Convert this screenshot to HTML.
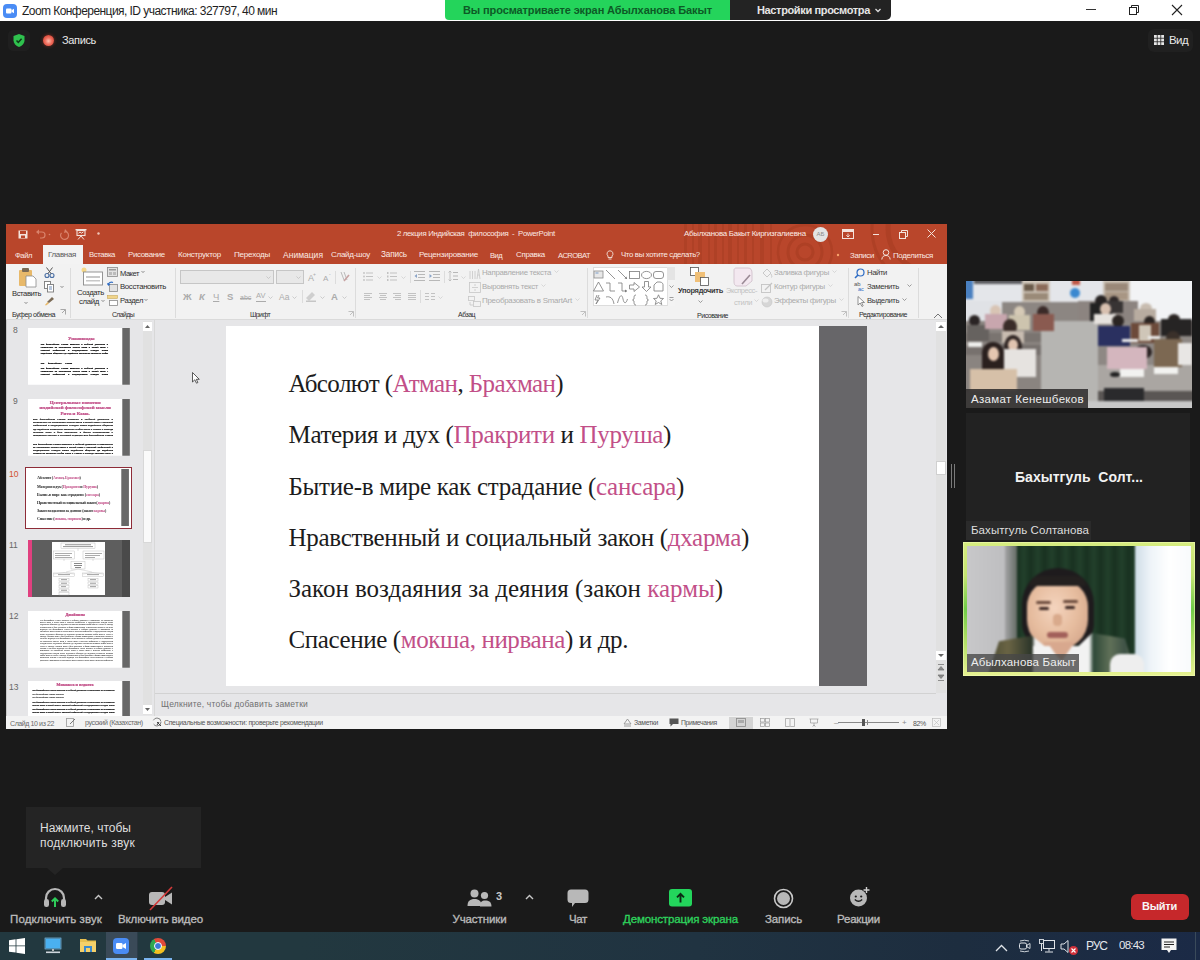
<!DOCTYPE html>
<html><head><meta charset="utf-8">
<style>
*{margin:0;padding:0;box-sizing:border-box}
html,body{width:1200px;height:960px;overflow:hidden;background:#1a1a1a;font-family:"Liberation Sans",sans-serif;position:relative}
.a{position:absolute}
.t{position:absolute;white-space:pre;line-height:1}
svg.a{overflow:visible}
</style></head><body>
<div class="a" style="left:0px;top:0px;width:1200px;height:21px;background:#fff;"></div>
<div class="a" style="left:3px;top:4px;width:14px;height:14px;background:#4a8cf5;border-radius:4px"></div>
<svg class="a" style="left:3px;top:4px;" width="14" height="14" viewBox="0 0 14 14"><rect x="3" y="4.5" width="5.5" height="5" rx="1" fill="#fff"/><path d="M8.5 6.2 L11 4.8 V9.2 L8.5 7.8Z" fill="#fff"/></svg>
<div class="t" style="left:22px;top:4.54px;font-size:12px;color:#1e1e1e;letter-spacing:-0.554px;">Zoom Конференция, ID участника: 327797, 40 мин</div>
<div class="a" style="left:445px;top:0px;width:286px;height:20px;background:#24d45b;border-radius:0 0 0 4px"></div>
<div class="t" style="left:463px;top:4.69px;font-size:11px;color:#0d5a26;font-weight:bold;letter-spacing:-0.113px;">Вы просматриваете экран Абылханова Бакыт</div>
<div class="a" style="left:730px;top:0px;width:161px;height:20px;background:#232323;border-radius:0 0 5px 0"></div>
<div class="t" style="left:757px;top:4.69px;font-size:11px;color:#e6e6e6;font-weight:bold;letter-spacing:-0.359px;">Настройки просмотра</div>
<svg class="a" style="left:874px;top:6px;" width="8" height="8" viewBox="0 0 8 8"><path d="M1.5 3 L4 5.5 L6.5 3" stroke="#ddd" stroke-width="1.3" fill="none"/></svg>
<div class="a" style="left:1086px;top:9px;width:10px;height:1px;background:#333;"></div>
<svg class="a" style="left:1128px;top:4px;" width="12" height="12" viewBox="0 0 12 12"><rect x="1.5" y="3.5" width="7" height="7" fill="none" stroke="#222" stroke-width="1"/><path d="M3.5 3.5 V1.5 H10.5 V8.5 H8.5" fill="none" stroke="#222" stroke-width="1"/></svg>
<svg class="a" style="left:1171px;top:4px;" width="12" height="12" viewBox="0 0 12 12"><path d="M1 1 L11 11 M11 1 L1 11" stroke="#222" stroke-width="1.1"/></svg>
<div class="a" style="left:8px;top:30px;width:22px;height:21px;background:#1f1f1f;border-radius:5px"></div>
<svg class="a" style="left:12px;top:33px;" width="14" height="15" viewBox="0 0 14 15"><path d="M7 1 L12.5 3 V7.5 C12.5 10.5 10 12.8 7 14 C4 12.8 1.5 10.5 1.5 7.5 V3 Z" fill="#2fc24e"/><path d="M4.5 7.5 L6.3 9.3 L9.6 5.8" stroke="#0d3a18" stroke-width="1.5" fill="none"/></svg>
<div class="a" style="left:43px;top:35px;width:11px;height:11px;border-radius:50%;background:radial-gradient(circle at 50% 55%,#ffc0b0 0,#f07060 40%,#d84838 75%,#a03020 100%);box-shadow:0 0 3px 1px rgba(200,60,40,0.35)"></div>
<div class="t" style="left:62px;top:35.19px;font-size:11px;color:#e8e8e8;letter-spacing:-0.349px;">Запись</div>
<div class="a" style="left:1148px;top:29px;width:45px;height:23px;background:#202020;border-radius:6px"></div>
<svg class="a" style="left:1154px;top:35px;" width="11" height="11" viewBox="0 0 11 11"><rect x="0.0" y="0.0" width="2.8" height="2.8" fill="#e6e6e6"/><rect x="0.0" y="3.6" width="2.8" height="2.8" fill="#e6e6e6"/><rect x="0.0" y="7.2" width="2.8" height="2.8" fill="#e6e6e6"/><rect x="3.6" y="0.0" width="2.8" height="2.8" fill="#e6e6e6"/><rect x="3.6" y="3.6" width="2.8" height="2.8" fill="#e6e6e6"/><rect x="3.6" y="7.2" width="2.8" height="2.8" fill="#e6e6e6"/><rect x="7.2" y="0.0" width="2.8" height="2.8" fill="#e6e6e6"/><rect x="7.2" y="3.6" width="2.8" height="2.8" fill="#e6e6e6"/><rect x="7.2" y="7.2" width="2.8" height="2.8" fill="#e6e6e6"/></svg>
<div class="t" style="left:1169px;top:34.77px;font-size:11.5px;color:#e8e8e8;letter-spacing:-0.604px;">Вид</div>
<div class="a" style="left:6px;top:224px;width:941px;height:505px;background:#e6e6e8;"></div>
<div class="a" style="left:6px;top:224px;width:941px;height:40px;background:#b9462b;"></div>
<svg class="a" style="left:640px;top:224px;overflow:hidden" width="307" height="40" viewBox="0 0 307 40"><g fill="none" stroke="#a63c22" stroke-opacity="0.6"><circle cx="165" cy="28" r="8" stroke-width="3"/><circle cx="165" cy="28" r="17" stroke-width="3"/><circle cx="165" cy="28" r="27" stroke-width="2.5"/><circle cx="290" cy="5" r="42" stroke-width="5"/><circle cx="290" cy="5" r="58" stroke-width="3"/></g><g fill="#a63c22" fill-opacity="0.5"><rect x="44" y="0" width="3" height="40"/><rect x="52" y="0" width="2" height="40"/><rect x="58" y="0" width="4" height="40"/><rect x="68" y="0" width="2" height="40"/><rect x="74" y="0" width="3" height="40"/><rect x="82" y="0" width="2" height="40"/><rect x="88" y="0" width="4" height="40"/><rect x="97" y="0" width="2" height="40"/><rect x="104" y="0" width="3" height="40"/><rect x="112" y="0" width="2" height="40"/><rect x="120" y="0" width="4" height="40"/><rect x="130" y="0" width="2" height="40"/></g></svg>
<svg class="a" style="left:18px;top:230px;" width="10" height="9" viewBox="0 0 10 9"><rect x="0.5" y="0.5" width="9" height="8" fill="#f4e3dc"/><rect x="2" y="1" width="6" height="3" fill="#b9462b"/><rect x="3" y="5.5" width="4" height="2.5" fill="#b9462b"/></svg>
<svg class="a" style="left:35px;top:229px;" width="12" height="11" viewBox="0 0 12 11"><path d="M3 3 H7 A3 3 0 0 1 7 9 H5" stroke="#d9836c" stroke-width="1.2" fill="none"/><path d="M1 3 L4 0.5 V5.5Z" fill="#d9836c"/></svg>
<svg class="a" style="left:48px;top:233px;" width="3" height="3" viewBox="0 0 3 3"><circle cx="1.5" cy="1.5" r="0.8" fill="#d9836c"/></svg>
<svg class="a" style="left:59px;top:229px;" width="10" height="11" viewBox="0 0 10 11"><path d="M6.5 2.5 A4 4 0 1 1 2.5 3.8" stroke="#d9836c" stroke-width="1.2" fill="none"/><path d="M6 0 L8.5 2.8 L5 4Z" fill="#d9836c"/></svg>
<svg class="a" style="left:75px;top:228px;" width="12" height="12" viewBox="0 0 12 12"><rect x="0.5" y="1" width="11" height="1.4" fill="#f4e3dc"/><rect x="2" y="2.5" width="8" height="5" fill="none" stroke="#f4e3dc" stroke-width="1.1"/><path d="M6 8 L3 11.5 M6 8 L9 11.5 M3.5 5.2 L5 4 L6.5 5.2 L8.5 3.8" stroke="#f4e3dc" stroke-width="1" fill="none"/></svg>
<svg class="a" style="left:96px;top:231px;" width="5" height="5" viewBox="0 0 5 5"><circle cx="2.5" cy="2.5" r="1.2" fill="#f0c6b8"/></svg>
<div class="t" style="left:397px;top:229.89px;font-size:7.81px;color:#fbe9e3;letter-spacing:-0.318px;">2 лекция Индийская  философия  -  PowerPoint</div>
<div class="t" style="left:684px;top:229.79px;font-size:7.93px;color:#fbe9e3;letter-spacing:-0.280px;">Абылханова Бакыт Киргизгалиевна</div>
<div class="a" style="left:813px;top:227px;width:15px;height:15px;border-radius:50%;background:#e3e3e3;color:#8a8a8a;font-size:6px;line-height:15px;text-align:center">АБ</div>
<svg class="a" style="left:842px;top:229px;" width="12" height="10" viewBox="0 0 12 10"><rect x="0.5" y="0.5" width="11" height="9" fill="none" stroke="#f4e3dc" stroke-width="1"/><rect x="0.5" y="0.5" width="11" height="2.5" fill="#f4e3dc"/><path d="M6 4.5 V8 M4.3 6.3 L6 8 L7.7 6.3" stroke="#f4e3dc" stroke-width="0.9" fill="none"/></svg>
<div class="a" style="left:873px;top:234px;width:6px;height:1px;background:#f4e3dc;"></div>
<svg class="a" style="left:899px;top:230px;" width="9" height="9" viewBox="0 0 9 9"><rect x="0.5" y="2.5" width="6" height="6" fill="none" stroke="#f4e3dc"/><path d="M2.5 2.5 V0.5 H8.5 V6.5 H6.5" fill="none" stroke="#f4e3dc"/></svg>
<svg class="a" style="left:927px;top:229px;" width="9" height="9" viewBox="0 0 9 9"><path d="M0.5 0.5 L8.5 8.5 M8.5 0.5 L0.5 8.5" stroke="#f4e3dc" stroke-width="1"/></svg>
<div class="a" style="left:43px;top:245px;width:40px;height:19px;background:#f3f3f3;"></div>
<div class="t" style="left:15px;top:251.52px;font-size:7.66px;color:#fbe9e3;letter-spacing:-0.463px;">Файл</div>
<div class="t" style="left:48px;top:251.30px;font-size:7.91px;color:#5a5a5a;letter-spacing:-0.300px;">Главная</div>
<div class="t" style="left:89px;top:251.47px;font-size:7.71px;color:#fbe9e3;letter-spacing:-0.380px;">Вставка</div>
<div class="t" style="left:128px;top:251.31px;font-size:7.9px;color:#fbe9e3;letter-spacing:-0.311px;">Рисование</div>
<div class="t" style="left:178px;top:251.22px;font-size:8.01px;color:#fbe9e3;letter-spacing:-0.241px;">Конструктор</div>
<div class="t" style="left:234px;top:251.16px;font-size:8.08px;color:#fbe9e3;letter-spacing:-0.236px;">Переходы</div>
<div class="t" style="left:283px;top:250.80px;font-size:8.5px;color:#fbe9e3;letter-spacing:0.012px;">Анимация</div>
<div class="t" style="left:331px;top:251.23px;font-size:8.0px;color:#fbe9e3;letter-spacing:-0.273px;">Слайд-шоу</div>
<div class="t" style="left:381px;top:251.05px;font-size:8.21px;color:#fbe9e3;letter-spacing:-0.155px;">Запись</div>
<div class="t" style="left:419px;top:251.18px;font-size:8.06px;color:#fbe9e3;letter-spacing:-0.231px;">Рецензирование</div>
<div class="t" style="left:490px;top:251.64px;font-size:7.51px;color:#fbe9e3;letter-spacing:-0.530px;">Вид</div>
<div class="t" style="left:516px;top:251.29px;font-size:7.93px;color:#fbe9e3;letter-spacing:-0.300px;">Справка</div>
<div class="t" style="left:558px;top:251.60px;font-size:7.56px;color:#fbe9e3;letter-spacing:-0.569px;">ACROBAT</div>
<svg class="a" style="left:606px;top:250px;" width="8" height="10" viewBox="0 0 8 10"><path d="M4 0.8 A3 3 0 0 1 6 6 V7.5 H2 V6 A3 3 0 0 1 4 0.8Z" fill="none" stroke="#f4e3dc" stroke-width="0.9"/><path d="M2.5 9 H5.5" stroke="#f4e3dc" stroke-width="0.9"/></svg>
<div class="t" style="left:621px;top:251.41px;font-size:7.79px;color:#fbe9e3;letter-spacing:-0.325px;">Что вы хотите сделать?</div>
<svg class="a" style="left:836px;top:253px;" width="4" height="4" viewBox="0 0 4 4"><circle cx="2" cy="2" r="1.2" fill="#f7a26b"/></svg>
<div class="t" style="left:850px;top:251.86px;font-size:7.84px;color:#fbe9e3;letter-spacing:-0.337px;">Записи</div>
<svg class="a" style="left:881px;top:249px;" width="11" height="11" viewBox="0 0 11 11"><circle cx="5" cy="3.5" r="2.8" fill="none" stroke="#f4e3dc" stroke-width="1"/><path d="M0.8 10.5 C1 7.5 3 6.5 5 6.5 C7 6.5 9 7.5 9.2 10.5" fill="none" stroke="#f4e3dc" stroke-width="1"/></svg>
<div class="t" style="left:893px;top:251.85px;font-size:7.85px;color:#fbe9e3;letter-spacing:-0.333px;">Поделиться</div>
<div class="a" style="left:6px;top:264px;width:941px;height:56px;background:#f2f2f2;"></div>
<div class="a" style="left:6px;top:319px;width:941px;height:1px;background:#dadada;"></div>
<svg class="a" style="left:17px;top:267px;" width="22" height="21" viewBox="0 0 22 21"><rect x="2" y="3" width="13" height="16" rx="1" fill="#e8b96a"/><rect x="5" y="1" width="7" height="4" rx="1" fill="#7a6a55"/><path d="M9 9 H16 L19 12 V20 H9Z" fill="#fff" stroke="#8c8c8c" stroke-width="0.8"/></svg>
<div class="t" style="left:12px;top:289.54px;font-size:7.63px;color:#2e2e2e;letter-spacing:-0.416px;">Вставить</div>
<svg class="a" style="left:23px;top:301px;" width="6" height="4" viewBox="0 0 6 4"><path d="M1.5 1 L3 2.6 L4.5 1" stroke="#777" stroke-width="0.8" fill="none"/></svg>
<svg class="a" style="left:44px;top:267px;" width="11" height="11" viewBox="0 0 11 11"><circle cx="3" cy="8.5" r="2" fill="none" stroke="#4a6fa5" stroke-width="1.1"/><circle cx="8" cy="8.5" r="2" fill="none" stroke="#4a6fa5" stroke-width="1.1"/><path d="M3.8 6.8 L8.5 0.5 M7.2 6.8 L2.5 0.5" stroke="#555" stroke-width="1"/></svg>
<svg class="a" style="left:44px;top:281px;" width="11" height="12" viewBox="0 0 11 12"><rect x="0.5" y="0.5" width="6" height="7" fill="#fff" stroke="#7a7a7a" stroke-width="0.9"/><rect x="3.5" y="3.5" width="6" height="7.5" fill="#fff" stroke="#7a7a7a" stroke-width="0.9"/><path d="M5 6 H8 M5 8 H8" stroke="#4a6fa5" stroke-width="0.8"/></svg>
<svg class="a" style="left:59px;top:285px;" width="6" height="4" viewBox="0 0 6 4"><path d="M1.5 1 L3 2.6 L4.5 1" stroke="#777" stroke-width="0.8" fill="none"/></svg>
<svg class="a" style="left:44px;top:296px;" width="11" height="10" viewBox="0 0 11 10"><path d="M8 1 L10 3 L5 7 L3 6Z" fill="#7a6a55"/><path d="M1 9 L3.5 6 L5 7.5 L2 9.5Z" fill="#e8b96a"/></svg>
<div class="t" style="left:12px;top:311.97px;font-size:7.12px;color:#2e2e2e;letter-spacing:-0.446px;">Буфер обмена</div>
<svg class="a" style="left:60px;top:309px;" width="6" height="6" viewBox="0 0 6 6"><path d="M0.5 0.5 H5.5 V5.5 M2 4 L5 1" stroke="#888" stroke-width="0.7" fill="none"/></svg>
<div class="a" style="left:70px;top:268px;width:1px;height:50px;background:#dcdcdc;"></div>
<svg class="a" style="left:80px;top:266px;" width="24" height="20" viewBox="0 0 24 20"><circle cx="4" cy="4" r="2.5" fill="#f5d88a"/><rect x="3.5" y="6" width="19" height="13" fill="#fff" stroke="#8a8a8a" stroke-width="0.9"/><rect x="6" y="10" width="14" height="2" fill="#c8c8c8"/><rect x="6" y="14" width="14" height="1.5" fill="#c8c8c8"/></svg>
<div class="t" style="left:77px;top:289.42px;font-size:7.77px;color:#2e2e2e;letter-spacing:-0.362px;">Создать</div>
<div class="t" style="left:79px;top:298.38px;font-size:7.82px;color:#2e2e2e;letter-spacing:-0.350px;">слайд</div>
<svg class="a" style="left:100px;top:299px;" width="6" height="4" viewBox="0 0 6 4"><path d="M1.5 1 L3 2.6 L4.5 1" stroke="#777" stroke-width="0.8" fill="none"/></svg>
<svg class="a" style="left:107px;top:267px;" width="11" height="10" viewBox="0 0 11 10"><rect x="0.5" y="0.5" width="10" height="9" fill="#e2e2e2" stroke="#8a8a8a" stroke-width="0.8"/><rect x="2" y="2" width="7" height="1.5" fill="#999"/><rect x="2" y="5" width="3" height="3" fill="#bbb"/><rect x="6" y="5" width="3" height="3" fill="#bbb"/></svg>
<div class="t" style="left:120px;top:269.61px;font-size:7.55px;color:#2e2e2e;letter-spacing:-0.476px;">Макет</div>
<svg class="a" style="left:140px;top:270px;" width="6" height="4" viewBox="0 0 6 4"><path d="M1.5 1 L3 2.6 L4.5 1" stroke="#777" stroke-width="0.8" fill="none"/></svg>
<svg class="a" style="left:107px;top:281px;" width="11" height="11" viewBox="0 0 11 11"><rect x="2.5" y="3.5" width="8" height="7" fill="#e2e2e2" stroke="#8a8a8a" stroke-width="0.8"/><path d="M1 4 A3.5 3.5 0 0 1 6 1.5" stroke="#2d6bc4" stroke-width="1.1" fill="none"/><path d="M0 2 L1.2 5 L3.5 3Z" fill="#2d6bc4"/></svg>
<div class="t" style="left:120px;top:283.39px;font-size:7.81px;color:#2e2e2e;letter-spacing:-0.337px;">Восстановить</div>
<svg class="a" style="left:107px;top:295px;" width="11" height="11" viewBox="0 0 11 11"><rect x="0.5" y="0.5" width="10" height="3" fill="#f0d48a" stroke="#c9a85a" stroke-width="0.6"/><rect x="2.5" y="5.5" width="8" height="5" fill="#fff" stroke="#8a8a8a" stroke-width="0.8"/></svg>
<div class="t" style="left:120px;top:297.49px;font-size:7.69px;color:#2e2e2e;letter-spacing:-0.404px;">Раздел</div>
<svg class="a" style="left:143px;top:298px;" width="6" height="4" viewBox="0 0 6 4"><path d="M1.5 1 L3 2.6 L4.5 1" stroke="#777" stroke-width="0.8" fill="none"/></svg>
<div class="t" style="left:112px;top:312.18px;font-size:6.88px;color:#2e2e2e;letter-spacing:-0.599px;">Слайды</div>
<div class="a" style="left:175px;top:268px;width:1px;height:50px;background:#dcdcdc;"></div>
<div class="a" style="left:180px;top:270px;width:94px;height:14px;background:#e8e8e8;border:1px solid #c6c6c6"></div>
<svg class="a" style="left:266px;top:276px;" width="5" height="3" viewBox="0 0 5 3"><path d="M0.5 0.5 L2.5 2.5 L4.5 0.5" stroke="#bbb" stroke-width="0.7" fill="none"/></svg>
<div class="a" style="left:276px;top:270px;width:28px;height:14px;background:#e8e8e8;border:1px solid #c6c6c6"></div>
<svg class="a" style="left:296px;top:276px;" width="5" height="3" viewBox="0 0 5 3"><path d="M0.5 0.5 L2.5 2.5 L4.5 0.5" stroke="#bbb" stroke-width="0.7" fill="none"/></svg>
<div class="t" style="left:308px;top:274.38px;font-size:9px;color:#ababab;">A</div>
<div class="t" style="left:313px;top:271.77px;font-size:5px;color:#ababab;">+</div>
<div class="t" style="left:323px;top:275.23px;font-size:8px;color:#ababab;">A</div>
<div class="t" style="left:329px;top:271.77px;font-size:5px;color:#ababab;">-</div>
<svg class="a" style="left:339px;top:271px;" width="11" height="11" viewBox="0 0 11 11"><path d="M2 1 L5 9 M5 1 L8 9" stroke="#bbb" stroke-width="1"/><path d="M5 10 L10 4" stroke="#c7a3a3" stroke-width="1.6"/></svg>
<div class="a" style="left:335px;top:271px;width:1px;height:13px;background:#dcdcdc;"></div>
<div class="t" style="left:183px;top:291.96px;font-size:9.5px;color:#ababab;font-weight:bold">Ж</div>
<div class="t" style="left:199px;top:291.96px;font-size:9.5px;color:#ababab;font-weight:bold;font-style:italic">К</div>
<div class="t" style="left:213px;top:291.96px;font-size:9.5px;color:#ababab;text-decoration:underline">Ч</div>
<div class="t" style="left:227px;top:291.96px;font-size:9.5px;color:#ababab;font-weight:bold">S</div>
<div class="t" style="left:240px;top:293.57px;font-size:7px;color:#ababab;text-decoration:line-through">abc</div>
<div class="t" style="left:256px;top:291.65px;font-size:7.5px;color:#ababab;">AV</div>
<div class="a" style="left:256px;top:301px;width:10px;height:1px;background:#ababab;"></div>
<div class="t" style="left:279px;top:292.80px;font-size:8.5px;color:#ababab;">Aa</div>
<svg class="a" style="left:268px;top:296px;" width="5" height="3" viewBox="0 0 5 3"><path d="M0.5 0.5 L2.5 2.5 L4.5 0.5" stroke="#bbb" stroke-width="0.7" fill="none"/></svg>
<svg class="a" style="left:292px;top:296px;" width="5" height="3" viewBox="0 0 5 3"><path d="M0.5 0.5 L2.5 2.5 L4.5 0.5" stroke="#bbb" stroke-width="0.7" fill="none"/></svg>
<div class="a" style="left:302px;top:290px;width:1px;height:13px;background:#dcdcdc;"></div>
<svg class="a" style="left:305px;top:290px;" width="12" height="12" viewBox="0 0 12 12"><path d="M1 8 L7 2 L10 5 L4 11Z" fill="#cfcfcf"/><rect x="1" y="10.5" width="10" height="1.5" fill="#c6c6c6"/></svg>
<svg class="a" style="left:320px;top:296px;" width="5" height="3" viewBox="0 0 5 3"><path d="M0.5 0.5 L2.5 2.5 L4.5 0.5" stroke="#bbb" stroke-width="0.7" fill="none"/></svg>
<div class="t" style="left:331px;top:291.96px;font-size:9.5px;color:#ababab;font-weight:bold;">A</div>
<svg class="a" style="left:342px;top:296px;" width="5" height="3" viewBox="0 0 5 3"><path d="M0.5 0.5 L2.5 2.5 L4.5 0.5" stroke="#bbb" stroke-width="0.7" fill="none"/></svg>
<div class="t" style="left:250px;top:312.10px;font-size:6.97px;color:#2e2e2e;letter-spacing:-0.589px;">Шрифт</div>
<svg class="a" style="left:348px;top:311px;" width="6" height="6" viewBox="0 0 6 6"><path d="M0.5 0.5 H5.5 V5.5 M2 4 L5 1" stroke="#aaa" stroke-width="0.7" fill="none"/></svg>
<div class="a" style="left:355px;top:268px;width:1px;height:50px;background:#dcdcdc;"></div>
<svg class="a" style="left:363px;top:272px;" width="10" height="9" viewBox="0 0 10 9"><circle cx="1" cy="1" r="0.9" fill="#c2c2c2"/><circle cx="1" cy="4.5" r="0.9" fill="#c2c2c2"/><circle cx="1" cy="8" r="0.9" fill="#c2c2c2"/><rect x="3" y="0.5" width="7" height="1" fill="#c2c2c2"/><rect x="3" y="4" width="7" height="1" fill="#c2c2c2"/><rect x="3" y="7.5" width="7" height="1" fill="#c2c2c2"/></svg>
<svg class="a" style="left:377px;top:276px;" width="5" height="3" viewBox="0 0 5 3"><path d="M0.5 0.5 L2.5 2.5 L4.5 0.5" stroke="#ccc" stroke-width="0.7" fill="none"/></svg>
<svg class="a" style="left:387px;top:272px;" width="10" height="9" viewBox="0 0 10 9"><rect x="0" y="0" width="1.5" height="2" fill="#c2c2c2"/><rect x="0" y="3.5" width="1.5" height="2" fill="#c2c2c2"/><rect x="0" y="7" width="1.5" height="2" fill="#c2c2c2"/><rect x="3" y="0.5" width="7" height="1" fill="#c2c2c2"/><rect x="3" y="4" width="7" height="1" fill="#c2c2c2"/><rect x="3" y="7.5" width="7" height="1" fill="#c2c2c2"/></svg>
<svg class="a" style="left:401px;top:276px;" width="5" height="3" viewBox="0 0 5 3"><path d="M0.5 0.5 L2.5 2.5 L4.5 0.5" stroke="#ccc" stroke-width="0.7" fill="none"/></svg>
<div class="a" style="left:410px;top:271px;width:1px;height:12px;background:#dcdcdc;"></div>
<svg class="a" style="left:414px;top:271px;" width="11" height="10" viewBox="0 0 11 10"><rect x="0" y="0" width="11" height="1" fill="#b8b8b8"/><rect x="4" y="3" width="7" height="1" fill="#b8b8b8"/><rect x="4" y="6" width="7" height="1" fill="#b8b8b8"/><rect x="0" y="9" width="11" height="1" fill="#b8b8b8"/><path d="M3 3 L0.5 5 L3 7Z" fill="#8aa4c8"/></svg>
<svg class="a" style="left:429px;top:271px;" width="11" height="10" viewBox="0 0 11 10"><rect x="0" y="0" width="11" height="1" fill="#b8b8b8"/><rect x="4" y="3" width="7" height="1" fill="#b8b8b8"/><rect x="4" y="6" width="7" height="1" fill="#b8b8b8"/><rect x="0" y="9" width="11" height="1" fill="#b8b8b8"/><path d="M0.5 3 L3 5 L0.5 7Z" fill="#8aa4c8"/></svg>
<div class="a" style="left:444px;top:271px;width:1px;height:12px;background:#dcdcdc;"></div>
<svg class="a" style="left:448px;top:270px;" width="10" height="12" viewBox="0 0 10 12"><path d="M2 1 V11 M0.5 2.5 L2 1 L3.5 2.5 M0.5 9.5 L2 11 L3.5 9.5" stroke="#b8b8b8" stroke-width="0.8" fill="none"/><rect x="5" y="2" width="5" height="1" fill="#b8b8b8"/><rect x="5" y="5.5" width="5" height="1" fill="#b8b8b8"/><rect x="5" y="9" width="5" height="1" fill="#b8b8b8"/></svg>
<svg class="a" style="left:461px;top:276px;" width="5" height="3" viewBox="0 0 5 3"><path d="M0.5 0.5 L2.5 2.5 L4.5 0.5" stroke="#ccc" stroke-width="0.7" fill="none"/></svg>
<svg class="a" style="left:364px;top:293px;" width="9" height="8" viewBox="0 0 9 8"><rect x="0" y="0" width="8" height="1" fill="#c2c2c2"/><rect x="0" y="2" width="6" height="1" fill="#c2c2c2"/><rect x="0" y="4" width="8" height="1" fill="#c2c2c2"/><rect x="0" y="6" width="6" height="1" fill="#c2c2c2"/></svg>
<svg class="a" style="left:379px;top:293px;" width="9" height="8" viewBox="0 0 9 8"><rect x="0" y="0" width="8" height="1" fill="#c2c2c2"/><rect x="1" y="2" width="6" height="1" fill="#c2c2c2"/><rect x="0" y="4" width="8" height="1" fill="#c2c2c2"/><rect x="1" y="6" width="6" height="1" fill="#c2c2c2"/></svg>
<svg class="a" style="left:393px;top:293px;" width="9" height="8" viewBox="0 0 9 8"><rect x="0" y="0" width="8" height="1" fill="#c2c2c2"/><rect x="2" y="2" width="6" height="1" fill="#c2c2c2"/><rect x="0" y="4" width="8" height="1" fill="#c2c2c2"/><rect x="2" y="6" width="6" height="1" fill="#c2c2c2"/></svg>
<svg class="a" style="left:408px;top:293px;" width="9" height="8" viewBox="0 0 9 8"><rect x="0" y="0" width="8" height="1" fill="#c2c2c2"/><rect x="0" y="2" width="8" height="1" fill="#c2c2c2"/><rect x="0" y="4" width="8" height="1" fill="#c2c2c2"/><rect x="0" y="6" width="8" height="1" fill="#c2c2c2"/></svg>
<div class="a" style="left:420px;top:290px;width:1px;height:13px;background:#dcdcdc;"></div>
<svg class="a" style="left:425px;top:293px;" width="10" height="8" viewBox="0 0 10 8"><rect x="0" y="0" width="4" height="1" fill="#c2c2c2"/><rect x="0" y="3" width="4" height="1" fill="#c2c2c2"/><rect x="0" y="6" width="4" height="1" fill="#c2c2c2"/><rect x="6" y="0" width="4" height="1" fill="#c2c2c2"/><rect x="6" y="3" width="4" height="1" fill="#c2c2c2"/><rect x="6" y="6" width="4" height="1" fill="#c2c2c2"/></svg>
<svg class="a" style="left:438px;top:296px;" width="5" height="3" viewBox="0 0 5 3"><path d="M0.5 0.5 L2.5 2.5 L4.5 0.5" stroke="#ccc" stroke-width="0.7" fill="none"/></svg>
<svg class="a" style="left:469px;top:268px;" width="12" height="12" viewBox="0 0 12 12"><path d="M1 3 V11 M3.5 3 V11 M6 3 V11" stroke="#c6c6c6" stroke-width="0.8"/><path d="M8 11 L9.5 1 L11 11 M8.5 7 H10.5" stroke="#c6c6c6" stroke-width="0.8" fill="none"/></svg>
<div class="t" style="left:482px;top:268.84px;font-size:7.87px;color:#ababab;letter-spacing:-0.309px;">Направление текста</div>
<svg class="a" style="left:554px;top:270px;" width="5" height="3" viewBox="0 0 5 3"><path d="M0.5 0.5 L2.5 2.5 L4.5 0.5" stroke="#ccc" stroke-width="0.7" fill="none"/></svg>
<svg class="a" style="left:469px;top:282px;" width="12" height="11" viewBox="0 0 12 11"><rect x="0.5" y="0.5" width="11" height="10" fill="none" stroke="#c6c6c6" stroke-width="0.8"/><path d="M3 5.5 H9 M6 2 V4 M6 7 V9" stroke="#c6c6c6" stroke-width="0.8"/></svg>
<div class="t" style="left:482px;top:282.88px;font-size:7.82px;color:#ababab;letter-spacing:-0.326px;">Выровнять текст</div>
<svg class="a" style="left:541px;top:284px;" width="5" height="3" viewBox="0 0 5 3"><path d="M0.5 0.5 L2.5 2.5 L4.5 0.5" stroke="#ccc" stroke-width="0.7" fill="none"/></svg>
<svg class="a" style="left:468px;top:296px;" width="13" height="11" viewBox="0 0 13 11"><rect x="0.5" y="0.5" width="6" height="4" fill="none" stroke="#c6c6c6" stroke-width="0.8"/><rect x="5.5" y="5.5" width="7" height="5" fill="none" stroke="#c6c6c6" stroke-width="0.8"/><path d="M2 6 V9 H5" stroke="#c6c6c6" stroke-width="0.8" fill="none"/></svg>
<div class="t" style="left:482px;top:296.78px;font-size:7.94px;color:#ababab;letter-spacing:-0.264px;">Преобразовать в SmartArt</div>
<svg class="a" style="left:575px;top:298px;" width="5" height="3" viewBox="0 0 5 3"><path d="M0.5 0.5 L2.5 2.5 L4.5 0.5" stroke="#ccc" stroke-width="0.7" fill="none"/></svg>
<div class="t" style="left:458px;top:312.11px;font-size:6.96px;color:#2e2e2e;letter-spacing:-0.507px;">Абзац</div>
<svg class="a" style="left:580px;top:311px;" width="6" height="6" viewBox="0 0 6 6"><path d="M0.5 0.5 H5.5 V5.5 M2 4 L5 1" stroke="#aaa" stroke-width="0.7" fill="none"/></svg>
<div class="a" style="left:587px;top:268px;width:1px;height:50px;background:#dcdcdc;"></div>
<div class="a" style="left:593px;top:267px;width:82px;height:39px;background:#fff;border:1px solid #dcdcdc"></div>
<div class="a" style="left:667px;top:267px;width:8px;height:39px;background:#f3f3f3;border-left:1px solid #e0e0e0"></div>
<div class="a" style="left:667px;top:267px;width:8px;height:13px;background:#e4e4e4;"></div>
<svg class="a" style="left:669px;top:285px;" width="5" height="3" viewBox="0 0 5 3"><path d="M0.5 0.5 L2.5 2.5 L4.5 0.5" stroke="#777" stroke-width="0.7" fill="none"/></svg>
<svg class="a" style="left:669px;top:297px;" width="5" height="5" viewBox="0 0 5 5"><path d="M0.5 0.5 H4.5 M0.5 2 L2.5 4 L4.5 2" stroke="#777" stroke-width="0.7" fill="none"/></svg>
<svg class="a" style="left:593px;top:269.0px;" width="11" height="12" viewBox="0 0 11 12"><rect x="1" y="2" width="9" height="7" fill="#e8e8e8" stroke="#8a8a8a" stroke-width="0.8"/><rect x="2.5" y="3.5" width="3" height="1" fill="#7a9cc8"/></svg>
<svg class="a" style="left:605px;top:269.0px;" width="11" height="12" viewBox="0 0 11 12"><path d="M1 1 L10 10" stroke="#7a7a7a" stroke-width="0.8"/></svg>
<svg class="a" style="left:617px;top:269.0px;" width="11" height="12" viewBox="0 0 11 12"><path d="M1 1 L10 10" stroke="#7a7a7a" stroke-width="0.8"/><path d="M10 10 L7.5 9.5 L9.5 7.5Z" fill="#7a7a7a"/></svg>
<svg class="a" style="left:629px;top:269.0px;" width="11" height="12" viewBox="0 0 11 12"><rect x="0.5" y="2.5" width="10" height="7" fill="none" stroke="#7a7a7a" stroke-width="0.8"/></svg>
<svg class="a" style="left:641px;top:269.0px;" width="11" height="12" viewBox="0 0 11 12"><ellipse cx="5.5" cy="6" rx="5" ry="3.6" fill="none" stroke="#7a7a7a" stroke-width="0.8"/></svg>
<svg class="a" style="left:653px;top:269.0px;" width="11" height="12" viewBox="0 0 11 12"><rect x="0.5" y="2.5" width="10" height="7" rx="2.5" fill="none" stroke="#7a7a7a" stroke-width="0.8"/></svg>
<svg class="a" style="left:593px;top:281.3px;" width="11" height="12" viewBox="0 0 11 12"><path d="M5.5 1 L10.5 10 H0.5Z" fill="none" stroke="#7a7a7a" stroke-width="0.8"/></svg>
<svg class="a" style="left:605px;top:281.3px;" width="11" height="12" viewBox="0 0 11 12"><path d="M1 2 H5 V10 H10" fill="none" stroke="#7a7a7a" stroke-width="0.8"/></svg>
<svg class="a" style="left:617px;top:281.3px;" width="11" height="12" viewBox="0 0 11 12"><path d="M1 2 H5 V10 H10" fill="none" stroke="#7a7a7a" stroke-width="0.8"/><path d="M10 10 L8 8.5 V11.5Z" fill="#7a7a7a"/></svg>
<svg class="a" style="left:629px;top:281.3px;" width="11" height="12" viewBox="0 0 11 12"><path d="M0.5 4 H5 V1.5 L10.5 6 L5 10.5 V8 H0.5Z" fill="none" stroke="#7a7a7a" stroke-width="0.8"/></svg>
<svg class="a" style="left:641px;top:281.3px;" width="11" height="12" viewBox="0 0 11 12"><path d="M3.5 0.5 H7.5 V6 H10 L5.5 10.5 L1 6 H3.5Z" fill="none" stroke="#7a7a7a" stroke-width="0.8"/></svg>
<svg class="a" style="left:653px;top:281.3px;" width="11" height="12" viewBox="0 0 11 12"><path d="M1 10 V4 L4 1 H7 A3.5 3.5 0 0 1 10 5 V10Z" fill="none" stroke="#7a7a7a" stroke-width="0.8"/></svg>
<svg class="a" style="left:593px;top:293.6px;" width="11" height="12" viewBox="0 0 11 12"><path d="M4 1 L2 6 H5 L3 10 L7 4 H4.5 L6 1" fill="none" stroke="#7a7a7a" stroke-width="0.8"/></svg>
<svg class="a" style="left:605px;top:293.6px;" width="11" height="12" viewBox="0 0 11 12"><path d="M1 3 C5 2 8 4 9 10" fill="none" stroke="#7a7a7a" stroke-width="0.8"/></svg>
<svg class="a" style="left:617px;top:293.6px;" width="11" height="12" viewBox="0 0 11 12"><path d="M0.5 9 C3 0 5 0 6 5 C7 10 9 10 10.5 5" fill="none" stroke="#7a7a7a" stroke-width="0.8"/></svg>
<svg class="a" style="left:629px;top:293.6px;" width="11" height="12" viewBox="0 0 11 12"><path d="M7 1 C5 1 5 2 5 5 L3.5 6 L5 7 C5 10 5 11 7 11" fill="none" stroke="#7a7a7a" stroke-width="0.8"/></svg>
<svg class="a" style="left:641px;top:293.6px;" width="11" height="12" viewBox="0 0 11 12"><path d="M4 1 C6 1 6 2 6 5 L7.5 6 L6 7 C6 10 6 11 4 11" fill="none" stroke="#7a7a7a" stroke-width="0.8"/></svg>
<svg class="a" style="left:653px;top:293.6px;" width="11" height="12" viewBox="0 0 11 12"><path d="M5.5 0.8 L7 4.3 L10.5 4.5 L7.8 6.9 L8.8 10.5 L5.5 8.5 L2.2 10.5 L3.2 6.9 L0.5 4.5 L4 4.3Z" fill="none" stroke="#7a7a7a" stroke-width="0.8"/></svg>
<svg class="a" style="left:690px;top:267px;" width="20" height="20" viewBox="0 0 20 20"><rect x="0.5" y="0.5" width="8" height="8" fill="#fff" stroke="#555" stroke-width="0.8"/><rect x="5" y="5" width="10" height="10" fill="#f0c078"/><rect x="10.5" y="10.5" width="8" height="8" fill="#fff" stroke="#555" stroke-width="0.8"/></svg>
<div class="t" style="left:678px;top:287.20px;font-size:7.44px;color:#3a3a3a;font-weight:bold;letter-spacing:-0.307px;">Упорядочить</div>
<svg class="a" style="left:698px;top:300px;" width="5" height="3" viewBox="0 0 5 3"><path d="M0.5 0.5 L2.5 2.5 L4.5 0.5" stroke="#777" stroke-width="0.7" fill="none"/></svg>
<svg class="a" style="left:733px;top:267px;" width="20" height="20" viewBox="0 0 20 20"><path d="M3 1 H15 C18 1 19 3 19 6 V14 L13 19 H4 C2 19 1 17 1 15 V3 C1 2 2 1 3 1Z" fill="#f3e8f0" stroke="#cdbdc8" stroke-width="0.8"/><path d="M9 17 L17 8" stroke="#9a8a95" stroke-width="1.6"/></svg>
<div class="t" style="left:726px;top:287.13px;font-size:7.52px;color:#c2c2c2;letter-spacing:-0.447px;">Экспресс-</div>
<div class="t" style="left:734px;top:298.58px;font-size:7.58px;color:#c2c2c2;letter-spacing:-0.435px;">стили</div>
<svg class="a" style="left:754px;top:299px;" width="5" height="3" viewBox="0 0 5 3"><path d="M0.5 0.5 L2.5 2.5 L4.5 0.5" stroke="#ccc" stroke-width="0.7" fill="none"/></svg>
<svg class="a" style="left:761px;top:268px;" width="12" height="11" viewBox="0 0 12 11"><path d="M2 5 L6 1 L10 5 L6 9Z" fill="none" stroke="#c4c4c4" stroke-width="0.9"/><path d="M10 6 C11 8 11 9 10.5 9.5" stroke="#c4c4c4" stroke-width="0.9" fill="none"/></svg>
<div class="t" style="left:774px;top:268.88px;font-size:7.82px;color:#ababab;letter-spacing:-0.340px;">Заливка фигуры</div>
<svg class="a" style="left:832px;top:270px;" width="5" height="3" viewBox="0 0 5 3"><path d="M0.5 0.5 L2.5 2.5 L4.5 0.5" stroke="#ccc" stroke-width="0.7" fill="none"/></svg>
<svg class="a" style="left:761px;top:282px;" width="12" height="11" viewBox="0 0 12 11"><rect x="0.5" y="2.5" width="9" height="8" fill="none" stroke="#c4c4c4" stroke-width="0.9"/><path d="M4 8 L11 1" stroke="#c4c4c4" stroke-width="1.2"/></svg>
<div class="t" style="left:774px;top:282.84px;font-size:7.87px;color:#ababab;letter-spacing:-0.313px;">Контур фигуры</div>
<svg class="a" style="left:828px;top:284px;" width="5" height="3" viewBox="0 0 5 3"><path d="M0.5 0.5 L2.5 2.5 L4.5 0.5" stroke="#ccc" stroke-width="0.7" fill="none"/></svg>
<svg class="a" style="left:761px;top:296px;" width="12" height="11" viewBox="0 0 12 11"><circle cx="6" cy="6" r="5" fill="#d6d6d6" stroke="#c4c4c4" stroke-width="0.6"/><ellipse cx="4.5" cy="4.5" rx="3" ry="2" fill="#eee"/></svg>
<div class="t" style="left:774px;top:296.77px;font-size:7.95px;color:#ababab;letter-spacing:-0.305px;">Эффекты фигуры</div>
<svg class="a" style="left:839px;top:298px;" width="5" height="3" viewBox="0 0 5 3"><path d="M0.5 0.5 L2.5 2.5 L4.5 0.5" stroke="#ccc" stroke-width="0.7" fill="none"/></svg>
<div class="t" style="left:697px;top:312.06px;font-size:7.02px;color:#2e2e2e;letter-spacing:-0.483px;">Рисование</div>
<svg class="a" style="left:841px;top:311px;" width="6" height="6" viewBox="0 0 6 6"><path d="M0.5 0.5 H5.5 V5.5 M2 4 L5 1" stroke="#aaa" stroke-width="0.7" fill="none"/></svg>
<div class="a" style="left:848px;top:268px;width:1px;height:50px;background:#dcdcdc;"></div>
<svg class="a" style="left:854px;top:268px;" width="11" height="11" viewBox="0 0 11 11"><circle cx="6.5" cy="4.5" r="3.5" fill="none" stroke="#2d6bc4" stroke-width="1.2"/><path d="M4 7 L1 10" stroke="#2d6bc4" stroke-width="1.6"/></svg>
<div class="t" style="left:867px;top:268.97px;font-size:7.72px;color:#3a3a3a;letter-spacing:-0.406px;">Найти</div>
<div class="t" style="left:854px;top:280.92px;font-size:6px;color:#555;">ab</div>
<div class="t" style="left:858px;top:286.84px;font-size:5.5px;color:#2d6bc4;">ac</div>
<div class="t" style="left:867px;top:282.91px;font-size:7.78px;color:#3a3a3a;letter-spacing:-0.371px;">Заменить</div>
<svg class="a" style="left:907px;top:284px;" width="5" height="3" viewBox="0 0 5 3"><path d="M0.5 0.5 L2.5 2.5 L4.5 0.5" stroke="#777" stroke-width="0.7" fill="none"/></svg>
<svg class="a" style="left:857px;top:296px;" width="9" height="11" viewBox="0 0 9 11"><path d="M1 0.5 V9 L3.2 7 L5 10.5 L6.2 9.8 L4.5 6.5 H7.5Z" fill="#fff" stroke="#777" stroke-width="0.8"/></svg>
<div class="t" style="left:867px;top:297.00px;font-size:7.68px;color:#3a3a3a;letter-spacing:-0.428px;">Выделить</div>
<svg class="a" style="left:902px;top:298px;" width="5" height="3" viewBox="0 0 5 3"><path d="M0.5 0.5 L2.5 2.5 L4.5 0.5" stroke="#777" stroke-width="0.7" fill="none"/></svg>
<div class="t" style="left:859px;top:311.99px;font-size:7.1px;color:#2e2e2e;letter-spacing:-0.435px;">Редактирование</div>
<div class="a" style="left:918px;top:268px;width:1px;height:50px;background:#dcdcdc;"></div>
<svg class="a" style="left:933px;top:313px;" width="10" height="6" viewBox="0 0 10 6"><path d="M1 5 L5 1 L9 5" stroke="#666" stroke-width="0.9" fill="none"/></svg>
<div class="a" style="left:6px;top:320px;width:1px;height:396px;background:#c8c8c8;"></div>
<div class="t" style="left:13px;top:326.30px;font-size:8.5px;color:#666;">8</div>
<div class="a" style="left:28px;top:328px;width:641px;height:357px;background:#fff;overflow:hidden;transform:scale(0.159);transform-origin:0 0;font-family:'Liberation Serif',serif"><div class="a" style="left:170px;top:52px;width:330px;text-align:center;font-size:30px;line-height:1;color:#c24f88;font-weight:bold;white-space:nowrap;-webkit-text-stroke:1.5px #c24f88">Упанишады</div><div class="a" style="left:78px;top:92px;width:426px;height:74.0px;overflow:hidden;font-size:14px;line-height:18.5px;text-align:justify;color:#000;font-weight:bold;-webkit-text-stroke:1px #000">Эти философские учения возникли в глубокой древности и развивались на протяжении многих веков в тесной связи с религией мифологией и традиционным укладом жизни индийского общества где ведийская литература занимала особое место а учения о природе человека мира и бога излагались в форме комментариев к священным текстам и поучений мудрецов Эти философские учения возникли в глубокой древности и развивались на протяжении многих веков в тесной связи с религией мифологией и традиционным укладом жизни индийского общества где ведийская литература занимала особое место а учения о природе человека мира и бога излагались в форме комментариев к священным текстам и поучений мудрецов Эти философские учения возникли в глубокой древности и развивались на протяжении многих веков в тесной связи с религией мифологией и традиционным укладом жизни индийского общества где ведийская литература занимала особое место а учения о природе человека мира и бога излагались в форме комментариев к священным текстам и поучений мудрецов Эти философские учения возникли в глубокой древности и развивались на протяжении многих веков в тесной связи с религией мифологией и традиционным укладом жизни индийского общества где ведийская литература занимала особое место а учения о природе человека мира и бога излагались в форме комментариев к священным текстам и поучений мудрецов Эти философские учения возникли в глубокой древности и развивались на протяжении многих веков в тесной связи с религией мифологией и традиционным укладом жизни индийского общества где ведийская литература занимала особое место а учения о природе человека мира и бога излагались в форме комментариев к священным текстам и поучений мудрецов Эти философские учения возникли в глубокой древности и развивались на протяжении многих веков в тесной связи с религией мифологией и традиционным укладом жизни индийского общества где ведийская литература занимала особое место а учения о природе человека мира и бога излагались в форме комментариев к священным текстам и поучений мудрецов </div><div class="a" style="left:78px;top:212px;width:200px;height:18px;overflow:hidden;font-size:14px;line-height:18px;text-align:justify;color:#000;font-weight:bold;-webkit-text-stroke:1px #000">Эти философские учения возникли в глубокой древности и развивались на протяжении многих веков в тесной связи с религией мифологией и традиционным укладом жизни индийского общества где ведийская литература занимала особое место а учения о природе человека мира и бога излагались в форме комментариев к священным текстам и поучений мудрецов Эти философские учения возникли в глубокой древности и развивались на протяжении многих веков в тесной связи с религией мифологией и традиционным укладом жизни индийского общества где ведийская литература занимала особое место а учения о природе человека мира и бога излагались в форме комментариев к священным текстам и поучений мудрецов Эти философские учения возникли в глубокой древности и развивались на протяжении многих веков в тесной связи с религией мифологией и традиционным укладом жизни индийского общества где ведийская литература занимала особое место а учения о природе человека мира и бога излагались в форме комментариев к священным текстам и поучений мудрецов Эти философские учения возникли в глубокой древности и развивались на протяжении многих веков в тесной связи с религией мифологией и традиционным укладом жизни индийского общества где ведийская литература занимала особое место а учения о природе человека мира и бога излагались в форме комментариев к священным текстам и поучений мудрецов Эти философские учения возникли в глубокой древности и развивались на протяжении многих веков в тесной связи с религией мифологией и традиционным укладом жизни индийского общества где ведийская литература занимала особое место а учения о природе человека мира и бога излагались в форме комментариев к священным текстам и поучений мудрецов Эти философские учения возникли в глубокой древности и развивались на протяжении многих веков в тесной связи с религией мифологией и традиционным укладом жизни индийского общества где ведийская литература занимала особое место а учения о природе человека мира и бога излагались в форме комментариев к священным текстам и поучений мудрецов </div><div class="a" style="left:78px;top:244px;width:426px;height:55.5px;overflow:hidden;font-size:14px;line-height:18.5px;text-align:justify;color:#000;font-weight:bold;-webkit-text-stroke:1px #000">Эти философские учения возникли в глубокой древности и развивались на протяжении многих веков в тесной связи с религией мифологией и традиционным укладом жизни индийского общества где ведийская литература занимала особое место а учения о природе человека мира и бога излагались в форме комментариев к священным текстам и поучений мудрецов Эти философские учения возникли в глубокой древности и развивались на протяжении многих веков в тесной связи с религией мифологией и традиционным укладом жизни индийского общества где ведийская литература занимала особое место а учения о природе человека мира и бога излагались в форме комментариев к священным текстам и поучений мудрецов Эти философские учения возникли в глубокой древности и развивались на протяжении многих веков в тесной связи с религией мифологией и традиционным укладом жизни индийского общества где ведийская литература занимала особое место а учения о природе человека мира и бога излагались в форме комментариев к священным текстам и поучений мудрецов Эти философские учения возникли в глубокой древности и развивались на протяжении многих веков в тесной связи с религией мифологией и традиционным укладом жизни индийского общества где ведийская литература занимала особое место а учения о природе человека мира и бога излагались в форме комментариев к священным текстам и поучений мудрецов Эти философские учения возникли в глубокой древности и развивались на протяжении многих веков в тесной связи с религией мифологией и традиционным укладом жизни индийского общества где ведийская литература занимала особое место а учения о природе человека мира и бога излагались в форме комментариев к священным текстам и поучений мудрецов Эти философские учения возникли в глубокой древности и развивались на протяжении многих веков в тесной связи с религией мифологией и традиционным укладом жизни индийского общества где ведийская литература занимала особое место а учения о природе человека мира и бога излагались в форме комментариев к священным текстам и поучений мудрецов </div><div class="a" style="left:593px;top:0;width:48px;height:360px;background:#686868"></div></div>
<div class="t" style="left:13px;top:397.30px;font-size:8.5px;color:#666;">9</div>
<div class="a" style="left:28px;top:399px;width:641px;height:357px;background:#fff;overflow:hidden;transform:scale(0.159);transform-origin:0 0;font-family:'Liberation Serif',serif"><div class="a" style="left:0px;top:6px;width:593px;text-align:center;font-size:31px;line-height:1;color:#c24f88;font-weight:bold;white-space:nowrap;-webkit-text-stroke:1.5px #c24f88">Центральные понятия</div><div class="a" style="left:0px;top:40px;width:593px;text-align:center;font-size:31px;line-height:1;color:#c24f88;font-weight:bold;white-space:nowrap;-webkit-text-stroke:1.5px #c24f88">индийской философской мысли</div><div class="a" style="left:0px;top:74px;width:593px;text-align:center;font-size:31px;line-height:1;color:#c24f88;font-weight:bold;white-space:nowrap;-webkit-text-stroke:1.5px #c24f88">Рита и Кама.</div><div class="a" style="left:31px;top:118px;width:504px;height:117.0px;overflow:hidden;font-size:16px;line-height:19.5px;text-align:justify;color:#222;font-weight:bold;-webkit-text-stroke:1px #222">Эти философские учения возникли в глубокой древности и развивались на протяжении многих веков в тесной связи с религией мифологией и традиционным укладом жизни индийского общества где ведийская литература занимала особое место а учения о природе человека мира и бога излагались в форме комментариев к священным текстам и поучений мудрецов Эти философские учения возникли в глубокой древности и развивались на протяжении многих веков в тесной связи с религией мифологией и традиционным укладом жизни индийского общества где ведийская литература занимала особое место а учения о природе человека мира и бога излагались в форме комментариев к священным текстам и поучений мудрецов Эти философские учения возникли в глубокой древности и развивались на протяжении многих веков в тесной связи с религией мифологией и традиционным укладом жизни индийского общества где ведийская литература занимала особое место а учения о природе человека мира и бога излагались в форме комментариев к священным текстам и поучений мудрецов Эти философские учения возникли в глубокой древности и развивались на протяжении многих веков в тесной связи с религией мифологией и традиционным укладом жизни индийского общества где ведийская литература занимала особое место а учения о природе человека мира и бога излагались в форме комментариев к священным текстам и поучений мудрецов Эти философские учения возникли в глубокой древности и развивались на протяжении многих веков в тесной связи с религией мифологией и традиционным укладом жизни индийского общества где ведийская литература занимала особое место а учения о природе человека мира и бога излагались в форме комментариев к священным текстам и поучений мудрецов Эти философские учения возникли в глубокой древности и развивались на протяжении многих веков в тесной связи с религией мифологией и традиционным укладом жизни индийского общества где ведийская литература занимала особое место а учения о природе человека мира и бога излагались в форме комментариев к священным текстам и поучений мудрецов </div><div class="a" style="left:31px;top:278px;width:504px;height:72px;overflow:hidden;font-size:15px;line-height:18px;text-align:justify;color:#111;font-weight:bold;-webkit-text-stroke:1px #111">Эти философские учения возникли в глубокой древности и развивались на протяжении многих веков в тесной связи с религией мифологией и традиционным укладом жизни индийского общества где ведийская литература занимала особое место а учения о природе человека мира и бога излагались в форме комментариев к священным текстам и поучений мудрецов Эти философские учения возникли в глубокой древности и развивались на протяжении многих веков в тесной связи с религией мифологией и традиционным укладом жизни индийского общества где ведийская литература занимала особое место а учения о природе человека мира и бога излагались в форме комментариев к священным текстам и поучений мудрецов Эти философские учения возникли в глубокой древности и развивались на протяжении многих веков в тесной связи с религией мифологией и традиционным укладом жизни индийского общества где ведийская литература занимала особое место а учения о природе человека мира и бога излагались в форме комментариев к священным текстам и поучений мудрецов Эти философские учения возникли в глубокой древности и развивались на протяжении многих веков в тесной связи с религией мифологией и традиционным укладом жизни индийского общества где ведийская литература занимала особое место а учения о природе человека мира и бога излагались в форме комментариев к священным текстам и поучений мудрецов Эти философские учения возникли в глубокой древности и развивались на протяжении многих веков в тесной связи с религией мифологией и традиционным укладом жизни индийского общества где ведийская литература занимала особое место а учения о природе человека мира и бога излагались в форме комментариев к священным текстам и поучений мудрецов Эти философские учения возникли в глубокой древности и развивались на протяжении многих веков в тесной связи с религией мифологией и традиционным укладом жизни индийского общества где ведийская литература занимала особое место а учения о природе человека мира и бога излагались в форме комментариев к священным текстам и поучений мудрецов </div><div class="a" style="left:593px;top:0;width:48px;height:360px;background:#686868"></div></div>
<div class="t" style="left:9px;top:469.80px;font-size:8.5px;color:#d2502f;">10</div>
<div class="a" style="left:25px;top:467px;width:107px;height:62px;background:#fff;border:1.5px solid #8e2c38"></div>
<div class="a" style="left:27px;top:469px;width:641px;height:358px;background:#fff;overflow:hidden;transform:scale(0.159);transform-origin:0 0;font-family:'Liberation Serif',serif"><div class="a" style="left:62.5px;top:44.6px;font-size:25px;line-height:1;white-space:nowrap;font-weight:bold;letter-spacing:-1.27px"><span style="color:#1c1c1c">Абсолют (</span><span style="color:#c24f88">Атман</span><span style="color:#1c1c1c">, </span><span style="color:#c24f88">Брахман</span><span style="color:#1c1c1c">)</span></div><div class="a" style="left:62.5px;top:96.1px;font-size:25px;line-height:1;white-space:nowrap;font-weight:bold;letter-spacing:-1.19px"><span style="color:#1c1c1c">Материя и дух (</span><span style="color:#c24f88">Пракрити</span><span style="color:#1c1c1c"> и </span><span style="color:#c24f88">Пуруша</span><span style="color:#1c1c1c">)</span></div><div class="a" style="left:62.5px;top:147.6px;font-size:25px;line-height:1;white-space:nowrap;font-weight:bold;letter-spacing:-1.19px"><span style="color:#1c1c1c">Бытие-в мире как страдание (</span><span style="color:#c24f88">сансара</span><span style="color:#1c1c1c">)</span></div><div class="a" style="left:62.5px;top:198.6px;font-size:25px;line-height:1;white-space:nowrap;font-weight:bold;letter-spacing:-1.26px"><span style="color:#1c1c1c">Нравственный и социальный закон (</span><span style="color:#c24f88">дхарма</span><span style="color:#1c1c1c">)</span></div><div class="a" style="left:62.5px;top:250.1px;font-size:25px;line-height:1;white-space:nowrap;font-weight:bold;letter-spacing:-0.99px"><span style="color:#1c1c1c">Закон воздаяния за деяния (закон </span><span style="color:#c24f88">кармы</span><span style="color:#1c1c1c">)</span></div><div class="a" style="left:62.5px;top:301.1px;font-size:25px;line-height:1;white-space:nowrap;font-weight:bold;letter-spacing:-1.15px"><span style="color:#1c1c1c">Спасение (</span><span style="color:#c24f88">мокша, нирвана</span><span style="color:#1c1c1c">) и др.</span></div><div class="a" style="left:593px;top:0;width:48px;height:360px;background:#686868"></div></div>
<div class="t" style="left:9px;top:540.80px;font-size:8.5px;color:#666;">11</div>
<div class="a" style="left:28px;top:540px;width:102px;height:57px;background:#5e5e5e;"></div>
<div class="a" style="left:28px;top:540px;width:4px;height:57px;background:#e0407f;"></div>
<div class="a" style="left:122px;top:540px;width:8px;height:57px;background:#4a4a4a;"></div>
<div class="a" style="left:52px;top:542px;width:53px;height:53px;background:#fff;"></div>
<svg class="a" style="left:52px;top:542px" width="53" height="53"><g fill="none" stroke="#aaa" stroke-width="0.35"><rect x="9" y="1" width="34" height="5.5"/><rect x="1.5" y="9" width="21" height="8"/><rect x="31" y="9" width="21" height="8"/><rect x="19" y="19.5" width="14" height="7.5"/><path d="M2 32 Q12 29 22 32 M31 32 Q41 29 51 32 M26 27 L14 30 M26 27 L40 30 M26 6.5 V9 M12 17 V19 M41 17 V19"/><rect x="1.5" y="31" width="21" height="3.5"/><rect x="30.5" y="31" width="21" height="3.5"/><rect x="7" y="36.5" width="10" height="2.5"/><rect x="7" y="40" width="10" height="2.5"/><rect x="7" y="43.5" width="10" height="2.5"/><rect x="7" y="47" width="10" height="2.5"/><rect x="7" y="50.5" width="10" height="2.5"/><rect x="36" y="36.5" width="10" height="2.5"/><rect x="36" y="40" width="10" height="2.5"/><rect x="36" y="43.5" width="10" height="2.5"/></g><g fill="#888"><rect x="13" y="2.3" width="26" height="0.9"/><rect x="11" y="4.2" width="30" height="0.9"/><rect x="3" y="11" width="17" height="0.7"/><rect x="3" y="13" width="15" height="0.7"/><rect x="3" y="15" width="17" height="0.7"/><rect x="33" y="11" width="17" height="0.7"/><rect x="33" y="13" width="15" height="0.7"/><rect x="33" y="15" width="10" height="0.7"/><rect x="22" y="21" width="8" height="1"/><rect x="22" y="23" width="8" height="1"/><rect x="23" y="25" width="6" height="1"/><rect x="6" y="32.3" width="12" height="0.8"/><rect x="35" y="32.3" width="12" height="0.8"/><rect x="9" y="37.3" width="6" height="0.8"/><rect x="9" y="40.8" width="6" height="0.8"/><rect x="9" y="44.3" width="5" height="0.8"/><rect x="9" y="47.8" width="6" height="0.8"/><rect x="38" y="37.3" width="6" height="0.8"/><rect x="38" y="40.8" width="6" height="0.8"/><rect x="38" y="44.3" width="6" height="0.8"/></g></svg>
<div class="t" style="left:9px;top:611.80px;font-size:8.5px;color:#666;">12</div>
<div class="a" style="left:28px;top:611px;width:641px;height:357px;background:#fff;overflow:hidden;transform:scale(0.159);transform-origin:0 0;font-family:'Liberation Serif',serif"><div class="a" style="left:0px;top:12px;width:593px;text-align:center;font-size:26px;line-height:1;color:#c24f88;font-weight:bold;white-space:nowrap;-webkit-text-stroke:1.5px #c24f88">Джайнизм</div><div class="a" style="left:75px;top:50px;width:460px;height:266.40000000000003px;overflow:hidden;font-size:11.5px;line-height:14.8px;text-align:justify;color:#333;font-weight:normal;-webkit-text-stroke:0.3px #333">Эти философские учения возникли в глубокой древности и развивались на протяжении многих веков в тесной связи с религией мифологией и традиционным укладом жизни индийского общества где ведийская литература занимала особое место а учения о природе человека мира и бога излагались в форме комментариев к священным текстам и поучений мудрецов Эти философские учения возникли в глубокой древности и развивались на протяжении многих веков в тесной связи с религией мифологией и традиционным укладом жизни индийского общества где ведийская литература занимала особое место а учения о природе человека мира и бога излагались в форме комментариев к священным текстам и поучений мудрецов Эти философские учения возникли в глубокой древности и развивались на протяжении многих веков в тесной связи с религией мифологией и традиционным укладом жизни индийского общества где ведийская литература занимала особое место а учения о природе человека мира и бога излагались в форме комментариев к священным текстам и поучений мудрецов Эти философские учения возникли в глубокой древности и развивались на протяжении многих веков в тесной связи с религией мифологией и традиционным укладом жизни индийского общества где ведийская литература занимала особое место а учения о природе человека мира и бога излагались в форме комментариев к священным текстам и поучений мудрецов Эти философские учения возникли в глубокой древности и развивались на протяжении многих веков в тесной связи с религией мифологией и традиционным укладом жизни индийского общества где ведийская литература занимала особое место а учения о природе человека мира и бога излагались в форме комментариев к священным текстам и поучений мудрецов Эти философские учения возникли в глубокой древности и развивались на протяжении многих веков в тесной связи с религией мифологией и традиционным укладом жизни индийского общества где ведийская литература занимала особое место а учения о природе человека мира и бога излагались в форме комментариев к священным текстам и поучений мудрецов </div><div class="a" style="left:593px;top:0;width:48px;height:360px;background:#686868"></div></div>
<div class="t" style="left:9px;top:682.80px;font-size:8.5px;color:#666;">13</div>
<div class="a" style="left:28px;top:681px;width:641px;height:220px;background:#fff;overflow:hidden;transform:scale(0.159);transform-origin:0 0;font-family:'Liberation Serif',serif"><div class="a" style="left:0px;top:10px;width:593px;text-align:center;font-size:26px;line-height:1;color:#c24f88;font-weight:bold;white-space:nowrap;-webkit-text-stroke:1.5px #c24f88">Мимамса и веданта</div><div class="a" style="left:26px;top:50px;width:520px;height:20px;overflow:hidden;font-size:13px;line-height:20px;text-align:justify;color:#222;font-weight:bold;-webkit-text-stroke:1px #222">Эти философские учения возникли в глубокой древности и развивались на протяжении многих веков в тесной связи с религией мифологией и традиционным укладом жизни индийского общества где ведийская литература занимала особое место а учения о природе человека мира и бога излагались в форме комментариев к священным текстам и поучений мудрецов Эти философские учения возникли в глубокой древности и развивались на протяжении многих веков в тесной связи с религией мифологией и традиционным укладом жизни индийского общества где ведийская литература занимала особое место а учения о природе человека мира и бога излагались в форме комментариев к священным текстам и поучений мудрецов Эти философские учения возникли в глубокой древности и развивались на протяжении многих веков в тесной связи с религией мифологией и традиционным укладом жизни индийского общества где ведийская литература занимала особое место а учения о природе человека мира и бога излагались в форме комментариев к священным текстам и поучений мудрецов Эти философские учения возникли в глубокой древности и развивались на протяжении многих веков в тесной связи с религией мифологией и традиционным укладом жизни индийского общества где ведийская литература занимала особое место а учения о природе человека мира и бога излагались в форме комментариев к священным текстам и поучений мудрецов Эти философские учения возникли в глубокой древности и развивались на протяжении многих веков в тесной связи с религией мифологией и традиционным укладом жизни индийского общества где ведийская литература занимала особое место а учения о природе человека мира и бога излагались в форме комментариев к священным текстам и поучений мудрецов Эти философские учения возникли в глубокой древности и развивались на протяжении многих веков в тесной связи с религией мифологией и традиционным укладом жизни индийского общества где ведийская литература занимала особое место а учения о природе человека мира и бога излагались в форме комментариев к священным текстам и поучений мудрецов </div><div class="a" style="left:26px;top:74px;width:200px;height:20px;overflow:hidden;font-size:13px;line-height:20px;text-align:justify;color:#555;font-weight:normal;-webkit-text-stroke:1px #555">Эти философские учения возникли в глубокой древности и развивались на протяжении многих веков в тесной связи с религией мифологией и традиционным укладом жизни индийского общества где ведийская литература занимала особое место а учения о природе человека мира и бога излагались в форме комментариев к священным текстам и поучений мудрецов Эти философские учения возникли в глубокой древности и развивались на протяжении многих веков в тесной связи с религией мифологией и традиционным укладом жизни индийского общества где ведийская литература занимала особое место а учения о природе человека мира и бога излагались в форме комментариев к священным текстам и поучений мудрецов Эти философские учения возникли в глубокой древности и развивались на протяжении многих веков в тесной связи с религией мифологией и традиционным укладом жизни индийского общества где ведийская литература занимала особое место а учения о природе человека мира и бога излагались в форме комментариев к священным текстам и поучений мудрецов Эти философские учения возникли в глубокой древности и развивались на протяжении многих веков в тесной связи с религией мифологией и традиционным укладом жизни индийского общества где ведийская литература занимала особое место а учения о природе человека мира и бога излагались в форме комментариев к священным текстам и поучений мудрецов Эти философские учения возникли в глубокой древности и развивались на протяжении многих веков в тесной связи с религией мифологией и традиционным укладом жизни индийского общества где ведийская литература занимала особое место а учения о природе человека мира и бога излагались в форме комментариев к священным текстам и поучений мудрецов Эти философские учения возникли в глубокой древности и развивались на протяжении многих веков в тесной связи с религией мифологией и традиционным укладом жизни индийского общества где ведийская литература занимала особое место а учения о природе человека мира и бога излагались в форме комментариев к священным текстам и поучений мудрецов </div><div class="a" style="left:26px;top:96px;width:200px;height:20px;overflow:hidden;font-size:13px;line-height:20px;text-align:justify;color:#555;font-weight:normal;-webkit-text-stroke:1px #555">Эти философские учения возникли в глубокой древности и развивались на протяжении многих веков в тесной связи с религией мифологией и традиционным укладом жизни индийского общества где ведийская литература занимала особое место а учения о природе человека мира и бога излагались в форме комментариев к священным текстам и поучений мудрецов Эти философские учения возникли в глубокой древности и развивались на протяжении многих веков в тесной связи с религией мифологией и традиционным укладом жизни индийского общества где ведийская литература занимала особое место а учения о природе человека мира и бога излагались в форме комментариев к священным текстам и поучений мудрецов Эти философские учения возникли в глубокой древности и развивались на протяжении многих веков в тесной связи с религией мифологией и традиционным укладом жизни индийского общества где ведийская литература занимала особое место а учения о природе человека мира и бога излагались в форме комментариев к священным текстам и поучений мудрецов Эти философские учения возникли в глубокой древности и развивались на протяжении многих веков в тесной связи с религией мифологией и традиционным укладом жизни индийского общества где ведийская литература занимала особое место а учения о природе человека мира и бога излагались в форме комментариев к священным текстам и поучений мудрецов Эти философские учения возникли в глубокой древности и развивались на протяжении многих веков в тесной связи с религией мифологией и традиционным укладом жизни индийского общества где ведийская литература занимала особое место а учения о природе человека мира и бога излагались в форме комментариев к священным текстам и поучений мудрецов Эти философские учения возникли в глубокой древности и развивались на протяжении многих веков в тесной связи с религией мифологией и традиционным укладом жизни индийского общества где ведийская литература занимала особое место а учения о природе человека мира и бога излагались в форме комментариев к священным текстам и поучений мудрецов </div><div class="a" style="left:26px;top:126px;width:520px;height:40px;overflow:hidden;font-size:13px;line-height:20px;text-align:justify;color:#222;font-weight:bold;-webkit-text-stroke:1px #222">Эти философские учения возникли в глубокой древности и развивались на протяжении многих веков в тесной связи с религией мифологией и традиционным укладом жизни индийского общества где ведийская литература занимала особое место а учения о природе человека мира и бога излагались в форме комментариев к священным текстам и поучений мудрецов Эти философские учения возникли в глубокой древности и развивались на протяжении многих веков в тесной связи с религией мифологией и традиционным укладом жизни индийского общества где ведийская литература занимала особое место а учения о природе человека мира и бога излагались в форме комментариев к священным текстам и поучений мудрецов Эти философские учения возникли в глубокой древности и развивались на протяжении многих веков в тесной связи с религией мифологией и традиционным укладом жизни индийского общества где ведийская литература занимала особое место а учения о природе человека мира и бога излагались в форме комментариев к священным текстам и поучений мудрецов Эти философские учения возникли в глубокой древности и развивались на протяжении многих веков в тесной связи с религией мифологией и традиционным укладом жизни индийского общества где ведийская литература занимала особое место а учения о природе человека мира и бога излагались в форме комментариев к священным текстам и поучений мудрецов Эти философские учения возникли в глубокой древности и развивались на протяжении многих веков в тесной связи с религией мифологией и традиционным укладом жизни индийского общества где ведийская литература занимала особое место а учения о природе человека мира и бога излагались в форме комментариев к священным текстам и поучений мудрецов Эти философские учения возникли в глубокой древности и развивались на протяжении многих веков в тесной связи с религией мифологией и традиционным укладом жизни индийского общества где ведийская литература занимала особое место а учения о природе человека мира и бога излагались в форме комментариев к священным текстам и поучений мудрецов </div><div class="a" style="left:26px;top:168px;width:520px;height:40px;overflow:hidden;font-size:13px;line-height:20px;text-align:justify;color:#111;font-weight:bold;-webkit-text-stroke:1px #111">Эти философские учения возникли в глубокой древности и развивались на протяжении многих веков в тесной связи с религией мифологией и традиционным укладом жизни индийского общества где ведийская литература занимала особое место а учения о природе человека мира и бога излагались в форме комментариев к священным текстам и поучений мудрецов Эти философские учения возникли в глубокой древности и развивались на протяжении многих веков в тесной связи с религией мифологией и традиционным укладом жизни индийского общества где ведийская литература занимала особое место а учения о природе человека мира и бога излагались в форме комментариев к священным текстам и поучений мудрецов Эти философские учения возникли в глубокой древности и развивались на протяжении многих веков в тесной связи с религией мифологией и традиционным укладом жизни индийского общества где ведийская литература занимала особое место а учения о природе человека мира и бога излагались в форме комментариев к священным текстам и поучений мудрецов Эти философские учения возникли в глубокой древности и развивались на протяжении многих веков в тесной связи с религией мифологией и традиционным укладом жизни индийского общества где ведийская литература занимала особое место а учения о природе человека мира и бога излагались в форме комментариев к священным текстам и поучений мудрецов Эти философские учения возникли в глубокой древности и развивались на протяжении многих веков в тесной связи с религией мифологией и традиционным укладом жизни индийского общества где ведийская литература занимала особое место а учения о природе человека мира и бога излагались в форме комментариев к священным текстам и поучений мудрецов Эти философские учения возникли в глубокой древности и развивались на протяжении многих веков в тесной связи с религией мифологией и традиционным укладом жизни индийского общества где ведийская литература занимала особое место а учения о природе человека мира и бога излагались в форме комментариев к священным текстам и поучений мудрецов </div><div class="a" style="left:593px;top:0;width:48px;height:360px;background:#686868"></div></div>
<div class="a" style="left:143px;top:321px;width:9px;height:394px;background:#e1e1e1;"></div>
<div class="a" style="left:143px;top:322px;width:9px;height:9px;background:#fff;"></div>
<svg class="a" style="left:145px;top:325px;" width="5" height="3" viewBox="0 0 5 3"><path d="M0 3 L2.5 0 L5 3Z" fill="#666"/></svg>
<div class="a" style="left:143px;top:450px;width:9px;height:93px;background:#fafafa;border:1px solid #d8d8d8"></div>
<div class="a" style="left:143px;top:705px;width:9px;height:9px;background:#fff;"></div>
<svg class="a" style="left:145px;top:708px;" width="5" height="3" viewBox="0 0 5 3"><path d="M0 0 L2.5 3 L5 0Z" fill="#666"/></svg>
<div class="a" style="left:154px;top:320px;width:1px;height:396px;background:#d8d8d8;"></div>
<div class="a" style="left:226px;top:326px;width:593px;height:360px;background:#fff;"></div>
<div class="a" style="left:819px;top:326px;width:48px;height:360px;background:#676669;"></div>
<div class="t" style="left:288.5px;top:370.56px;font-size:25px;letter-spacing:-0.577px;font-family:'Liberation Serif',serif"><span style="color:#1c1c1c">Абсолют (</span><span style="color:#c24f88">Атман</span><span style="color:#1c1c1c">, </span><span style="color:#c24f88">Брахман</span><span style="color:#1c1c1c">)</span></div>
<div class="t" style="left:288.5px;top:422.06px;font-size:25px;letter-spacing:-0.349px;font-family:'Liberation Serif',serif"><span style="color:#1c1c1c">Материя и дух (</span><span style="color:#c24f88">Пракрити</span><span style="color:#1c1c1c"> и </span><span style="color:#c24f88">Пуруша</span><span style="color:#1c1c1c">)</span></div>
<div class="t" style="left:288.5px;top:473.56px;font-size:25px;letter-spacing:-0.283px;font-family:'Liberation Serif',serif"><span style="color:#1c1c1c">Бытие-в мире как страдание (</span><span style="color:#c24f88">сансара</span><span style="color:#1c1c1c">)</span></div>
<div class="t" style="left:288.5px;top:524.56px;font-size:25px;letter-spacing:-0.281px;font-family:'Liberation Serif',serif"><span style="color:#1c1c1c">Нравственный и социальный закон (</span><span style="color:#c24f88">дхарма</span><span style="color:#1c1c1c">)</span></div>
<div class="t" style="left:288.5px;top:576.06px;font-size:25px;letter-spacing:-0.020px;font-family:'Liberation Serif',serif"><span style="color:#1c1c1c">Закон воздаяния за деяния (закон </span><span style="color:#c24f88">кармы</span><span style="color:#1c1c1c">)</span></div>
<div class="t" style="left:288.5px;top:627.06px;font-size:25px;letter-spacing:-0.383px;font-family:'Liberation Serif',serif"><span style="color:#1c1c1c">Спасение (</span><span style="color:#c24f88">мокша, нирвана</span><span style="color:#1c1c1c">) и др.</span></div>
<div class="a" style="left:936px;top:321px;width:10px;height:372px;background:#e1e1e1;"></div>
<div class="a" style="left:936px;top:322px;width:10px;height:9px;background:#fff;"></div>
<svg class="a" style="left:938px;top:325px;" width="6" height="3" viewBox="0 0 6 3"><path d="M0 3 L3 0 L6 3Z" fill="#666"/></svg>
<div class="a" style="left:936px;top:461px;width:10px;height:14px;background:#fff;border:1px solid #d0d0d0"></div>
<div class="a" style="left:936px;top:651px;width:10px;height:9px;background:#fff;"></div>
<svg class="a" style="left:938px;top:654px;" width="6" height="3" viewBox="0 0 6 3"><path d="M0 0 L3 3 L6 0Z" fill="#666"/></svg>
<svg class="a" style="left:937px;top:664px;" width="8" height="7" viewBox="0 0 8 7"><path d="M1 0.5 H7 M1 6 L4 2.5 L7 6Z" stroke="#777" stroke-width="0.8" fill="#888"/></svg>
<svg class="a" style="left:937px;top:674px;" width="8" height="7" viewBox="0 0 8 7"><path d="M1 6.5 H7 M1 1 L4 4.5 L7 1Z" stroke="#777" stroke-width="0.8" fill="#888"/></svg>
<div class="a" style="left:155px;top:693px;width:781px;height:1px;background:#d2d2d2;"></div>
<div class="a" style="left:155px;top:694px;width:781px;height:22px;background:#e6e6e8;"></div>
<div class="t" style="left:161px;top:699.80px;font-size:8.5px;color:#707070;letter-spacing:0.207px;">Щелкните, чтобы добавить заметки</div>
<div class="a" style="left:6px;top:716px;width:941px;height:13px;background:#f3f3f3;"></div>
<div class="t" style="left:10px;top:720.03px;font-size:7.05px;color:#6a6a6a;letter-spacing:-0.423px;">Слайд 10 из 22</div>
<svg class="a" style="left:66px;top:718px;" width="10" height="9" viewBox="0 0 10 9"><rect x="0.5" y="0.5" width="7" height="8" fill="none" stroke="#999" stroke-width="0.8"/><path d="M4 6 L9 1" stroke="#777" stroke-width="1"/></svg>
<div class="t" style="left:85px;top:720.00px;font-size:7.09px;color:#6a6a6a;letter-spacing:-0.390px;">русский (Казахстан)</div>
<svg class="a" style="left:152px;top:717px;" width="11" height="11" viewBox="0 0 11 11"><circle cx="5" cy="5" r="4" fill="none" stroke="#777" stroke-width="0.9" stroke-dasharray="10 4"/><path d="M5 5 L9 9 M7 5 L5 8" stroke="#444" stroke-width="1"/></svg>
<div class="t" style="left:164px;top:720.16px;font-size:6.9px;color:#555;letter-spacing:-0.296px;">Специальные возможности: проверьте рекомендации</div>
<svg class="a" style="left:623px;top:718px;" width="9" height="9" viewBox="0 0 9 9"><path d="M1 8 H8 M4.5 1 L8 6 H1Z" fill="none" stroke="#888" stroke-width="0.8"/></svg>
<div class="t" style="left:634px;top:720.19px;font-size:6.86px;color:#555;letter-spacing:-0.320px;">Заметки</div>
<svg class="a" style="left:669px;top:718px;" width="10" height="9" viewBox="0 0 10 9"><path d="M0.5 0.5 H9.5 V6 H4 L1.5 8.5 V6 H0.5Z" fill="#555"/></svg>
<div class="t" style="left:681px;top:720.21px;font-size:6.84px;color:#555;letter-spacing:-0.349px;">Примечания</div>
<div class="a" style="left:729px;top:717px;width:24px;height:12px;background:#d4d4d4;"></div>
<svg class="a" style="left:736px;top:718px;" width="10" height="9" viewBox="0 0 10 9"><rect x="0.5" y="0.5" width="9" height="8" fill="none" stroke="#888" stroke-width="0.8"/><rect x="2" y="2" width="6" height="3" fill="#aaa"/></svg>
<svg class="a" style="left:760px;top:718px;" width="10" height="9" viewBox="0 0 10 9"><rect x="0.5" y="0.5" width="4" height="3.5" fill="none" stroke="#999" stroke-width="0.7"/><rect x="5.5" y="0.5" width="4" height="3.5" fill="none" stroke="#999" stroke-width="0.7"/><rect x="0.5" y="5" width="4" height="3.5" fill="none" stroke="#999" stroke-width="0.7"/><rect x="5.5" y="5" width="4" height="3.5" fill="none" stroke="#999" stroke-width="0.7"/></svg>
<svg class="a" style="left:785px;top:718px;" width="10" height="9" viewBox="0 0 10 9"><path d="M0.5 0.5 H4.5 L5 1 L5.5 0.5 H9.5 V8.5 H5.5 L5 8 L4.5 8.5 H0.5Z M5 1 V8" fill="none" stroke="#999" stroke-width="0.7"/></svg>
<svg class="a" style="left:809px;top:718px;" width="10" height="9" viewBox="0 0 10 9"><path d="M0.5 1 H9.5 M1.5 1 V5 H8.5 V1 M5 5 V8.5 M3.5 8.5 L5 7 L6.5 8.5" fill="none" stroke="#999" stroke-width="0.7"/></svg>
<div class="t" style="left:834px;top:719.23px;font-size:8px;color:#888;">–</div>
<div class="a" style="left:838px;top:722px;width:61px;height:1px;background:#888;"></div>
<div class="a" style="left:862px;top:719px;width:3px;height:7px;background:#555;"></div>
<div class="a" style="left:867px;top:720px;width:1px;height:5px;background:#888;"></div>
<div class="t" style="left:902px;top:719.23px;font-size:8px;color:#888;">+</div>
<div class="t" style="left:913px;top:720.09px;font-size:6.98px;color:#555;letter-spacing:-0.324px;">82%</div>
<svg class="a" style="left:932px;top:718px;" width="9" height="9" viewBox="0 0 9 9"><rect x="0.5" y="0.5" width="8" height="8" fill="none" stroke="#bbb" stroke-width="0.7"/><path d="M2 2 L7 7 M7 2 L2 7" stroke="#bbb" stroke-width="0.6"/></svg>
<div class="a" style="left:951px;top:464px;width:1px;height:24px;background:#7a7a7a;"></div>
<div class="a" style="left:954px;top:464px;width:1px;height:24px;background:#7a7a7a;"></div>
<div class="a" style="left:966px;top:281px;width:226px;height:127px;overflow:hidden;background:#9c9894"><div class="a" style="left:0;top:0;width:226px;height:127px;filter:blur(1.1px)"><div class="a" style="left:-4px;top:-4px;width:234px;height:135px;background:#9c9894"></div><div class="a" style="left:-4px;top:-4px;width:234px;height:26px;background:#e4e6ea"></div><div class="a" style="left:8px;top:-4px;width:52px;height:7px;background:#5a5a5e"></div><div class="a" style="left:-4px;top:-4px;width:11px;height:22px;background:#4a80c0"></div><div class="a" style="left:56px;top:-4px;width:28px;height:25px;background:#cfc6ba"></div><div class="a" style="left:58px;top:3px;width:10px;height:7px;background:#6a5a4a"></div><div class="a" style="left:70px;top:3px;width:12px;height:7px;background:#8a6a58"></div><div class="a" style="left:58px;top:12px;width:24px;height:7px;background:#9a8a78"></div><div class="a" style="left:104px;top:7px;width:10px;height:10px;border-radius:50%;background:#3a88d0"></div><div class="a" style="left:106px;top:-4px;width:8px;height:8px;background:#c05848"></div><div class="a" style="left:137px;top:-4px;width:27px;height:25px;background:#cbc2b6"></div><div class="a" style="left:139px;top:2px;width:23px;height:8px;background:#9a8878"></div><div class="a" style="left:139px;top:11px;width:23px;height:8px;background:#a89684"></div><div class="a" style="left:164px;top:-4px;width:66px;height:46px;background:#f2f3f5"></div><div class="a" style="left:35px;top:21px;width:95px;height:20px;background:#8c8682"></div><div class="a" style="left:-4px;top:20px;width:40px;height:22px;background:#e0e2e6"></div><div class="a" style="left:-4px;top:40px;width:84px;height:70px;background:#8a8480"></div><div class="a" style="left:-4px;top:52px;width:90px;height:9px;background:#7a7470"></div><div class="a" style="left:-4px;top:64px;width:82px;height:10px;background:#77716e"></div><div class="a" style="left:75px;top:40px;width:57px;height:90px;background:#b6b5b2"></div><div class="a" style="left:112px;top:20px;width:60px;height:20px;background:#8c8480"></div><div class="a" style="left:132px;top:40px;width:98px;height:50px;background:#8e8884"></div><div class="a" style="left:132px;top:84px;width:98px;height:26px;background:#aaa6a2"></div><div class="a" style="left:132px;top:110px;width:98px;height:20px;background:#5a5654"></div><div class="a" style="left:138px;top:107px;width:40px;height:15px;background:#2a2a2c"></div><div class="a" style="left:112px;top:120px;width:118px;height:10px;background:#c8c8c8"></div><div class="a" style="left:3px;top:34px;width:11px;height:11px;border-radius:50%;background:#2a2424"></div><div class="a" style="left:1px;top:44px;width:22px;height:16px;background:#66625f"></div><div class="a" style="left:24px;top:24px;width:11px;height:12px;border-radius:50%;background:#d8c4b4"></div><div class="a" style="left:19px;top:33px;width:22px;height:15px;background:#c8a6ae"></div><div class="a" style="left:48px;top:25px;width:11px;height:12px;border-radius:50%;background:#d6cab6"></div><div class="a" style="left:43px;top:34px;width:21px;height:15px;background:#cdc4ae"></div><div class="a" style="left:71px;top:25px;width:12px;height:14px;border-radius:50%;background:#3a2a28"></div><div class="a" style="left:67px;top:33px;width:21px;height:17px;background:#8a5a50"></div><div class="a" style="left:37px;top:38px;width:14px;height:16px;border-radius:50%;background:#3a2c28"></div><div class="a" style="left:36px;top:50px;width:22px;height:12px;background:#c8bcb0"></div><div class="a" style="left:38px;top:54px;width:18px;height:24px;border-radius:50%;background:#2e2422"></div><div class="a" style="left:42px;top:58px;width:10px;height:12px;border-radius:50%;background:#e0c4b0"></div><div class="a" style="left:38px;top:68px;width:32px;height:28px;background:#e6e3e0"></div><div class="a" style="left:16px;top:61px;width:22px;height:45px;border-radius:11px 11px 4px 4px;background:#2a201e"></div><div class="a" style="left:22px;top:66px;width:11px;height:14px;border-radius:50%;background:#e4c6b0"></div><div class="a" style="left:4px;top:88px;width:47px;height:22px;background:#d6c0a8"></div><div class="a" style="left:2px;top:61px;width:14px;height:5px;background:#eeeeec"></div><div class="a" style="left:129px;top:14px;width:12px;height:12px;border-radius:50%;background:#262222"></div><div class="a" style="left:124px;top:22px;width:22px;height:18px;background:#222222"></div><div class="a" style="left:143px;top:15px;width:10px;height:11px;border-radius:50%;background:#2e2828"></div><div class="a" style="left:140px;top:20px;width:17px;height:12px;background:#383434"></div><div class="a" style="left:134px;top:22px;width:11px;height:12px;border-radius:50%;background:#d8c0b0"></div><div class="a" style="left:128px;top:33px;width:22px;height:10px;background:#e6e2de"></div><div class="a" style="left:174px;top:22px;width:12px;height:11px;border-radius:50%;background:#c8bcb0"></div><div class="a" style="left:168px;top:28px;width:22px;height:12px;background:#b8aca0"></div><div class="a" style="left:146px;top:34px;width:12px;height:12px;border-radius:50%;background:#2a2422"></div><div class="a" style="left:132px;top:45px;width:32px;height:20px;background:#2a3060"></div><div class="a" style="left:178px;top:35px;width:11px;height:12px;border-radius:50%;background:#2a2422"></div><div class="a" style="left:165px;top:42px;width:28px;height:20px;background:#6c4a3a"></div><div class="a" style="left:173px;top:44px;width:12px;height:16px;background:#cfc6b8"></div><div class="a" style="left:202px;top:33px;width:12px;height:11px;border-radius:50%;background:#2a2422"></div><div class="a" style="left:195px;top:38px;width:31px;height:17px;background:#262424"></div><div class="a" style="left:156px;top:58px;width:16px;height:3px;background:#f0f0f0"></div><div class="a" style="left:182px;top:55px;width:12px;height:3px;background:#eeeeee"></div><div class="a" style="left:168px;top:64px;width:18px;height:14px;border-radius:50%;background:#2a2222"></div><div class="a" style="left:141px;top:66px;width:40px;height:22px;background:#d4b6be"></div><div class="a" style="left:200px;top:50px;width:14px;height:14px;border-radius:50%;background:#3a302a"></div><div class="a" style="left:188px;top:58px;width:28px;height:28px;background:#7c6852"></div><div class="a" style="left:212px;top:62px;width:14px;height:22px;background:#e8e6e4"></div><div class="a" style="left:154px;top:88px;width:24px;height:8px;background:#f2f2f0"></div><div class="a" style="left:188px;top:86px;width:24px;height:7px;background:#f2f2f0"></div><div class="a" style="left:144px;top:91px;width:10px;height:5px;border-radius:50%;background:#222"></div></div><div class="a" style="left:0;top:108px;width:122px;height:19px;background:rgba(48,46,46,0.88)"></div></div>
<div class="t" style="left:971px;top:394.27px;font-size:11.5px;color:#eeeeee;letter-spacing:0.327px;">Азамат Кенешбеков</div>
<div class="a" style="left:966px;top:413px;width:224px;height:127px;background:#222222;"></div>
<div class="t" style="left:1015px;top:469.85px;font-size:14px;color:#f2f2f2;font-weight:bold;letter-spacing:0.018px;">Бахытгуль  Солт...</div>
<div class="a" style="left:966px;top:521px;width:125px;height:19px;background:#2b2b2b;"></div>
<div class="t" style="left:971px;top:525.27px;font-size:11.5px;color:#dedede;letter-spacing:0.072px;">Бахытгуль Солтанова</div>
<div class="a" style="left:963px;top:542px;width:232px;height:134px;background:linear-gradient(180deg,#d6ec80 0,#c4e472 25%,#70cc48 50%,#a8dc60 70%,#e8f292 100%);box-shadow:inset 0 0 0 1px rgba(240,250,180,0.6)"></div>
<div class="a" style="left:967px;top:546px;width:224px;height:126px;overflow:hidden;background:#1f3a28"><div class="a" style="left:-6px;top:-6px;width:236px;height:138px;filter:blur(1.3px)"><div class="a" style="left:6px;top:6px;width:224px;height:126px">
<div class="a" style="left:-6px;top:-6px;width:48px;height:138px;background:linear-gradient(90deg,#c9c9cb,#bdbdbf)"></div>
<div class="a" style="left:38px;top:-6px;width:14px;height:138px;background:linear-gradient(90deg,#a4a4a6,#5a625a)"></div>
<div class="a" style="left:50px;top:-6px;width:120px;height:138px;background:repeating-linear-gradient(90deg,#1a3222 0,#22402b 7px,#183020 14px)"></div>
<div class="a" style="left:168px;top:-6px;width:62px;height:138px;background:linear-gradient(90deg,#cfdde8 0,#eef4f8 25%,#ffffff 55%,#f6f9fb 100%)"></div>
<div class="a" style="left:55px;top:22px;width:72px;height:78px;border-radius:36px 36px 22px 22px;background:#1e1b1d"></div>
<div class="a" style="left:60px;top:34px;width:61px;height:70px;border-radius:28px 28px 32px 32px;background:radial-gradient(ellipse at 45% 40%,#f4d4be 0,#e6bc9e 50%,#cc9c82 100%)"></div>
<div class="a" style="left:62px;top:30px;width:57px;height:10px;border-radius:24px 24px 0 0;background:#24201f"></div>
<div class="a" style="left:69px;top:55px;width:15px;height:3px;border-radius:2px;background:#6a4a3c"></div>
<div class="a" style="left:96px;top:54px;width:15px;height:3px;border-radius:2px;background:#6a4a3c"></div>
<div class="a" style="left:72px;top:61px;width:10px;height:3px;border-radius:2px;background:#3a2622"></div>
<div class="a" style="left:98px;top:60px;width:10px;height:3px;border-radius:2px;background:#3a2622"></div>
<div class="a" style="left:86px;top:68px;width:9px;height:12px;border-radius:4px;background:#d9aa8c"></div>
<div class="a" style="left:80px;top:86px;width:21px;height:6px;border-radius:3px;background:#a2605a"></div>
<div class="a" style="left:76px;top:96px;width:30px;height:20px;background:#d8a88e"></div>
<div class="a" style="left:20px;top:86px;width:150px;height:46px;background:linear-gradient(90deg,#4a4a34 0,#6a6444 14%,#3a4030 26%,#2a3428 30%,#f0f0f0 32%,#f4f4f4 68%,#2e4838 71%,#607058 82%,#3e5246 92%,#6a765a 100%);clip-path:polygon(0 100%,8% 20%,30% 8%,42% 40%,50% 62%,58% 40%,70% 2%,92% 14%,100% 100%)"></div>
<div class="a" style="left:66px;top:100px;width:56px;height:32px;background:#f2f2f2;clip-path:polygon(0 0,30% 0,50% 50%,70% 0,100% 0,100% 100%,0 100%)"></div>
<div class="a" style="left:143px;top:108px;width:34px;height:24px;background:#eeeeee;border-radius:10px 10px 0 0"></div>
</div></div><div class="a" style="left:0;top:108px;width:112px;height:18px;background:rgba(70,70,70,0.78)"></div>
</div>
<div class="t" style="left:971px;top:657.27px;font-size:11.5px;color:#eeeeee;letter-spacing:0.183px;">Абылханова Бакыт</div>
<div class="a" style="left:26px;top:807px;width:175px;height:61px;background:#242424;"></div>
<svg class="a" style="left:47px;top:868px;" width="16" height="8" viewBox="0 0 16 8"><path d="M0 0 L8 7 L16 0Z" fill="#242424"/></svg>
<div class="t" style="left:40px;top:821.84px;font-size:12px;color:#dedede;letter-spacing:0.013px;">Нажмите, чтобы</div>
<div class="t" style="left:40px;top:837.34px;font-size:12px;color:#dedede;letter-spacing:0.204px;">подключить звук</div>
<svg class="a" style="left:43px;top:888px;" width="24" height="20" viewBox="0 0 24 20"><path d="M3 13 V10 A9 9 0 0 1 21 10 V13" fill="none" stroke="#b8b8b8" stroke-width="2.2"/><rect x="1" y="11" width="5" height="8" rx="2.3" fill="#b8b8b8"/><rect x="18" y="11" width="5" height="8" rx="2.3" fill="#b8b8b8"/><path d="M12 19 V10.5 M8.8 13.5 L12 10.3 L15.2 13.5" stroke="#2ecc5a" stroke-width="2" fill="none"/></svg>
<svg class="a" style="left:94px;top:894px;" width="9" height="6" viewBox="0 0 9 6"><path d="M1 5 L4.5 1.5 L8 5" stroke="#c8c8c8" stroke-width="1.4" fill="none"/></svg>
<div class="t" style="left:10px;top:913.77px;font-size:11.5px;color:#b9b9b9;letter-spacing:0.123px;-webkit-text-stroke:0.35px #b9b9b9">Подключить звук</div>
<svg class="a" style="left:148px;top:886px;" width="26" height="25" viewBox="0 0 26 25"><rect x="1" y="6" width="16" height="13" rx="3" fill="#b8b8b8"/><path d="M17 11 L24 6.5 V18.5 L17 14Z" fill="#b8b8b8"/><path d="M2 24 L24 1" stroke="#d23a3a" stroke-width="1.6"/></svg>
<div class="t" style="left:118px;top:913.77px;font-size:11.5px;color:#b9b9b9;letter-spacing:-0.131px;-webkit-text-stroke:0.35px #b9b9b9">Включить видео</div>
<svg class="a" style="left:467px;top:889px;" width="26" height="18" viewBox="0 0 26 18"><circle cx="7.5" cy="4.5" r="4" fill="#b8b8b8"/><path d="M0.5 17 C0.5 12 3 10 7.5 10 C12 10 14.5 12 14.5 17Z" fill="#b8b8b8"/><circle cx="17.5" cy="6.5" r="3.6" fill="#b8b8b8"/><path d="M13 17.5 C13 13 15 11.5 18 11.5 C22 11.5 24.5 13 24.5 17.5Z" fill="#b8b8b8"/></svg>
<div class="t" style="left:496px;top:891.19px;font-size:11px;color:#c8c8c8;font-weight:bold;">3</div>
<svg class="a" style="left:525px;top:894px;" width="9" height="6" viewBox="0 0 9 6"><path d="M1 5 L4.5 1.5 L8 5" stroke="#c8c8c8" stroke-width="1.4" fill="none"/></svg>
<div class="t" style="left:452.5px;top:913.77px;font-size:11.5px;color:#b9b9b9;letter-spacing:-0.106px;-webkit-text-stroke:0.35px #b9b9b9">Участники</div>
<svg class="a" style="left:567px;top:889px;" width="22" height="19" viewBox="0 0 22 19"><path d="M4 0.5 H18 A3.5 3.5 0 0 1 21.5 4 V10.5 A3.5 3.5 0 0 1 18 14 H8 L5 18 V14 H4 A3.5 3.5 0 0 1 0.5 10.5 V4 A3.5 3.5 0 0 1 4 0.5Z" fill="#b8b8b8"/></svg>
<div class="t" style="left:569px;top:913.77px;font-size:11.5px;color:#b9b9b9;letter-spacing:-0.359px;-webkit-text-stroke:0.35px #b9b9b9">Чат</div>
<svg class="a" style="left:669px;top:889px;" width="23" height="18" viewBox="0 0 23 18"><rect x="0" y="0" width="23" height="17.5" rx="3" fill="#23d55c"/><path d="M11.5 13.5 V5 M8 8.3 L11.5 4.8 L15 8.3" stroke="#0b2a14" stroke-width="1.9" fill="none"/></svg>
<div class="t" style="left:623px;top:913.77px;font-size:11.5px;color:#2ed15c;letter-spacing:-0.132px;-webkit-text-stroke:0.35px #2ed15c">Демонстрация экрана</div>
<svg class="a" style="left:773px;top:888px;" width="21" height="21" viewBox="0 0 21 21"><circle cx="10.5" cy="10.5" r="9" fill="none" stroke="#c8c8c8" stroke-width="1.6"/><circle cx="10.5" cy="10.5" r="6.5" fill="#b8b8b8"/></svg>
<div class="t" style="left:765px;top:913.77px;font-size:11.5px;color:#b9b9b9;letter-spacing:-0.122px;-webkit-text-stroke:0.35px #b9b9b9">Запись</div>
<svg class="a" style="left:849px;top:886px;" width="22" height="22" viewBox="0 0 22 22"><circle cx="9.5" cy="12" r="8.5" fill="#b8b8b8"/><circle cx="6.8" cy="10.5" r="1.1" fill="#1a1a1a"/><circle cx="12.2" cy="10.5" r="1.1" fill="#1a1a1a"/><path d="M5.8 13.5 Q9.5 17 13.2 13.5" stroke="#1a1a1a" stroke-width="1.3" fill="none"/><path d="M17.5 1 V7 M14.5 4 H20.5" stroke="#d0d0d0" stroke-width="1.4"/></svg>
<div class="t" style="left:837px;top:913.77px;font-size:11.5px;color:#b9b9b9;letter-spacing:-0.205px;-webkit-text-stroke:0.35px #b9b9b9">Реакции</div>
<div class="a" style="left:1131px;top:894px;width:58px;height:26px;background:#c6282b;border-radius:6px"></div>
<div class="t" style="left:1142px;top:901.19px;font-size:11px;color:#f6f6f6;font-weight:bold;letter-spacing:-0.250px;">Выйти</div>
<div class="a" style="left:0px;top:932px;width:1200px;height:28px;background:linear-gradient(90deg,#22383f 0,#22383f 25%,#203341 58%,#1d2d3f 80%,#1b2a46 100%);"></div>
<svg class="a" style="left:9px;top:938px;" width="16" height="16" viewBox="0 0 16 16"><path d="M0 2.2 L6.6 1.3 V7.5 H0Z M7.4 1.2 L16 0 V7.5 H7.4Z M0 8.3 H6.6 V14.6 L0 13.7Z M7.4 8.3 H16 V16 L7.4 14.8Z" fill="#fff"/></svg>
<svg class="a" style="left:45px;top:938px;" width="17" height="16" viewBox="0 0 17 16"><rect x="0.5" y="0.5" width="15" height="10" fill="#4ab0f0"/><rect x="0" y="0" width="16" height="11" fill="none" stroke="#8ad0ff" stroke-width="0.6"/><rect x="7" y="11" width="2" height="2" fill="#bbb"/><rect x="1" y="13.5" width="14" height="1.6" fill="#cfd6dc"/></svg>
<svg class="a" style="left:80px;top:938px;" width="17" height="15" viewBox="0 0 17 15"><path d="M0 1 H6 L7.5 2.5 H16 V14 H0Z" fill="#e8c050"/><rect x="0" y="4" width="16" height="10" fill="#f4d06a"/><path d="M5 14 V9 H11 V14" stroke="#3a8ad0" stroke-width="2" fill="none"/></svg>
<div class="a" style="left:106px;top:932px;width:31px;height:28px;background:#3a4a58;"></div>
<div class="a" style="left:106px;top:958px;width:31px;height:2px;background:#7ab4f0;"></div>
<div class="a" style="left:113px;top:938px;width:16px;height:16px;background:#4a8cf5;border-radius:4px"></div>
<svg class="a" style="left:113px;top:938px;" width="16" height="16" viewBox="0 0 16 16"><rect x="3" y="5" width="6.5" height="6" rx="1.2" fill="#fff"/><path d="M9.5 7 L13 5 V11 L9.5 9Z" fill="#fff"/></svg>
<div class="a" style="left:137px;top:932px;width:1px;height:28px;background:#2c3c48;"></div>
<div class="a" style="left:144px;top:958px;width:28px;height:2px;background:#7ab4f0;"></div>
<div class="a" style="left:150px;top:938px;width:16px;height:16px;border-radius:50%;background:conic-gradient(from -30deg,#e04a3a 0 120deg,#f4c020 120deg 240deg,#30a850 240deg 360deg)"></div>
<div class="a" style="left:154px;top:942px;width:8px;height:8px;border-radius:50%;background:#3a7ad8;border:1.5px solid #fff"></div>
<svg class="a" style="left:995px;top:944px;" width="13" height="8" viewBox="0 0 13 8"><path d="M1 7 L6.5 1.5 L12 7" stroke="#e0e4e8" stroke-width="1.3" fill="none"/></svg>
<svg class="a" style="left:1018px;top:938px;" width="13" height="16" viewBox="0 0 13 16"><path d="M2 3 A8 4 0 0 1 11 3 M2 13 A8 4 0 0 0 11 13" stroke="#dfe3e8" stroke-width="0.9" fill="none"/><rect x="1.5" y="5" width="7" height="6" rx="1.5" fill="none" stroke="#dfe3e8" stroke-width="1"/><path d="M9 7 L12 5.5 V10.5 L9 9Z" fill="none" stroke="#dfe3e8" stroke-width="0.9"/></svg>
<svg class="a" style="left:1039px;top:939px;" width="16" height="15" viewBox="0 0 16 15"><rect x="4.5" y="1.5" width="11" height="8" fill="none" stroke="#dfe3e8" stroke-width="1"/><rect x="0.5" y="0.5" width="4" height="4" fill="#1e2e40" stroke="#dfe3e8" stroke-width="0.9"/><path d="M10 9.5 V12.5 M6 13 H14 M2.5 4.5 V12" stroke="#dfe3e8" stroke-width="1"/></svg>
<svg class="a" style="left:1060px;top:939px;" width="19" height="17" viewBox="0 0 19 17"><path d="M1 5 H4 L8 1.5 V13.5 L4 10 H1Z" fill="none" stroke="#dfe3e8" stroke-width="1"/><circle cx="13.5" cy="11.5" r="4.5" fill="#d0303a"/><path d="M11.5 9.5 L15.5 13.5 M15.5 9.5 L11.5 13.5" stroke="#fff" stroke-width="1.1"/></svg>
<div class="t" style="left:1086px;top:939.84px;font-size:12px;color:#e4e8ec;letter-spacing:-1.010px;">РУС</div>
<div class="t" style="left:1119px;top:939.77px;font-size:11.5px;color:#e4e8ec;letter-spacing:-0.756px;">08:43</div>
<svg class="a" style="left:1161px;top:938px;" width="16" height="16" viewBox="0 0 16 16"><path d="M0.5 0.5 H15.5 V12 H10 L8 15 L6 12 H0.5Z" fill="#f4f4f4"/><rect x="3" y="3.5" width="10" height="1" fill="#222"/><rect x="3" y="6" width="10" height="1" fill="#222"/><rect x="3" y="8.5" width="6" height="1" fill="#222"/></svg>
<div class="a" style="left:1195px;top:932px;width:1px;height:28px;background:#3a4a5a;"></div>
<svg class="a" style="left:192px;top:372px;" width="8" height="12" viewBox="0 0 8 12"><path d="M0.5 0.5 V10 L2.8 7.8 L4.5 11.2 L5.9 10.5 L4.3 7.3 H7.3Z" fill="#fff" stroke="#333" stroke-width="0.8"/></svg>
</body></html>
